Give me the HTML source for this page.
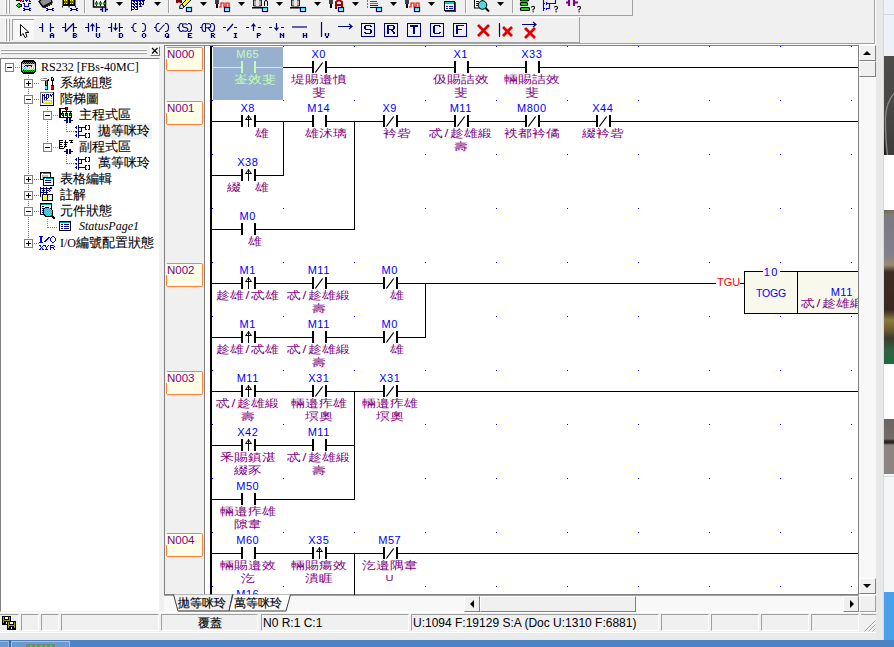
<!DOCTYPE html>
<html><head><meta charset="utf-8"><style>
*{margin:0;padding:0;box-sizing:border-box}
html,body{width:894px;height:647px;overflow:hidden;background:#f0f0f0;position:relative;font-family:"Liberation Sans",sans-serif}
.a{position:absolute}
.lb{position:absolute;width:71px;text-align:center;font:11px "Liberation Sans",sans-serif;line-height:13px;letter-spacing:0.5px;text-indent:0.5px;white-space:nowrap}
.cm{position:absolute;width:111px;text-align:center;font:14px "Liberation Sans",sans-serif;line-height:16px;letter-spacing:0px;white-space:nowrap;transform:scaleY(0.8);transform-origin:0 0}
.sl{display:inline-block;width:7px;text-align:center}
.rl::before{content:"";position:absolute;left:-1px;top:11px;bottom:0;border-left:1px solid #ff8040}
.rl{position:absolute;left:166px;width:37px;height:24px;border:1px solid #ff8040;border-left-color:#ffffe8;border-radius:2px;background:#ffffe8;color:#800080;font:11.5px "Liberation Sans",sans-serif;line-height:12px;padding:0;letter-spacing:0px}
.tr{position:absolute;font:12px "Liberation Serif",serif;line-height:16px;white-space:nowrap;color:#000}
.cj{font-size:13px;-webkit-text-stroke:0.1px #000}
.tb{position:absolute;font:12px 'Liberation Sans',sans-serif;line-height:13px;color:#000;white-space:nowrap;-webkit-text-stroke:0.15px #000}
.sp{position:absolute;top:614px;height:17px;border-top:1px solid #a0a0a0;border-left:1px solid #a0a0a0;border-right:1px solid #fff;border-bottom:1px solid #fff;font:12px "Liberation Sans",sans-serif;line-height:15px;color:#000;white-space:nowrap}
</style></head><body>
<!-- toolbars -->
<div class="a" style="left:874px;top:0;width:1px;height:44px;background:#a0a0a0"></div>
<div class="a" style="left:875px;top:0;width:1px;height:45px;background:#fff"></div>
<div class="a" style="left:0;top:43px;width:875px;height:1px;background:#a0a0a0"></div>
<div class="a" style="left:0;top:44px;width:876px;height:1px;background:#fff"></div>
<div class="a" style="left:0;top:0;width:633px;height:16px;border-right:1px solid #a0a0a0;border-bottom:1px solid #a0a0a0"></div>
<div class="a" style="left:0;top:17px;width:579px;height:1px;background:#fff"></div>
<div class="a" style="left:0;top:17px;width:580px;height:26px;border-right:1px solid #a0a0a0;border-bottom:1px solid #a0a0a0"></div>
<svg class="a" style="left:0;top:0" width="640" height="44">
<rect x="5" y="0" width="1" height="14" fill="#fff"/><rect x="6" y="0" width="1" height="14" fill="#a0a0a0"/>
<rect x="8" y="0" width="1" height="14" fill="#fff"/><rect x="9" y="0" width="1" height="14" fill="#a0a0a0"/>
<rect x="5" y="19" width="1" height="22" fill="#fff"/><rect x="6" y="19" width="1" height="22" fill="#a0a0a0"/>
<rect x="8" y="19" width="1" height="22" fill="#fff"/><rect x="9" y="19" width="1" height="22" fill="#a0a0a0"/>
<rect x="84" y="0" width="1" height="13" fill="#a0a0a0"/><rect x="85" y="0" width="1" height="13" fill="#fff"/>
<rect x="168" y="0" width="1" height="13" fill="#a0a0a0"/><rect x="169" y="0" width="1" height="13" fill="#fff"/>
<rect x="465" y="0" width="1" height="13" fill="#a0a0a0"/><rect x="466" y="0" width="1" height="13" fill="#fff"/>
<rect x="512" y="0" width="1" height="13" fill="#a0a0a0"/><rect x="513" y="0" width="1" height="13" fill="#fff"/>
<rect x="16" y="0" width="1" height="1" fill="#000"/>
<rect x="17" y="0" width="1" height="1" fill="#000"/>
<rect x="18" y="0" width="1" height="1" fill="#000"/>
<rect x="19" y="0" width="1" height="1" fill="#000"/>
<rect x="20" y="0" width="1" height="1" fill="#ff0000"/>
<rect x="21" y="0" width="1" height="1" fill="#000"/>
<rect x="23" y="0" width="1" height="1" fill="#0000ff"/>
<rect x="25" y="0" width="1" height="1" fill="#0000ff"/>
<rect x="26" y="0" width="1" height="1" fill="#0000ff"/>
<rect x="27" y="0" width="1" height="1" fill="#0000ff"/>
<rect x="29" y="0" width="1" height="1" fill="#0000ff"/>
<rect x="20" y="1" width="1" height="1" fill="#000"/>
<rect x="22" y="1" width="1" height="1" fill="#0000ff"/>
<rect x="23" y="1" width="1" height="1" fill="#0000ff"/>
<rect x="26" y="1" width="1" height="1" fill="#0000ff"/>
<rect x="29" y="1" width="1" height="1" fill="#0000ff"/>
<rect x="30" y="1" width="1" height="1" fill="#0000ff"/>
<rect x="18" y="3" width="1" height="1" fill="#000"/>
<rect x="19" y="3" width="1" height="1" fill="#000"/>
<rect x="23" y="3" width="1" height="1" fill="#0000ff"/>
<rect x="24" y="3" width="1" height="1" fill="#0000ff"/>
<rect x="28" y="3" width="1" height="1" fill="#0000ff"/>
<rect x="29" y="3" width="1" height="1" fill="#0000ff"/>
<rect x="30" y="3" width="1" height="1" fill="#0000ff"/>
<rect x="17" y="4" width="1" height="1" fill="#000"/>
<rect x="18" y="4" width="1" height="1" fill="#00ff00"/>
<rect x="19" y="4" width="1" height="1" fill="#000"/>
<rect x="20" y="4" width="1" height="1" fill="#000"/>
<rect x="21" y="4" width="1" height="1" fill="#000"/>
<rect x="24" y="4" width="1" height="1" fill="#0000ff"/>
<rect x="28" y="4" width="1" height="1" fill="#0000ff"/>
<rect x="16" y="5" width="1" height="1" fill="#000"/>
<rect x="17" y="5" width="1" height="1" fill="#00ff00"/>
<rect x="18" y="5" width="1" height="1" fill="#00ff00"/>
<rect x="19" y="5" width="1" height="1" fill="#00ff00"/>
<rect x="20" y="5" width="1" height="1" fill="#00ff00"/>
<rect x="21" y="5" width="1" height="1" fill="#000"/>
<rect x="24" y="5" width="1" height="1" fill="#0000ff"/>
<rect x="28" y="5" width="1" height="1" fill="#0000ff"/>
<rect x="17" y="6" width="1" height="1" fill="#000"/>
<rect x="18" y="6" width="1" height="1" fill="#00ff00"/>
<rect x="19" y="6" width="1" height="1" fill="#000"/>
<rect x="20" y="6" width="1" height="1" fill="#000"/>
<rect x="21" y="6" width="1" height="1" fill="#000"/>
<rect x="24" y="6" width="1" height="1" fill="#0000ff"/>
<rect x="25" y="6" width="1" height="1" fill="#0000ff"/>
<rect x="26" y="6" width="1" height="1" fill="#0000ff"/>
<rect x="27" y="6" width="1" height="1" fill="#0000ff"/>
<rect x="28" y="6" width="1" height="1" fill="#0000ff"/>
<rect x="18" y="7" width="1" height="1" fill="#000"/>
<rect x="19" y="7" width="1" height="1" fill="#000"/>
<rect x="23" y="8" width="1" height="1" fill="#000080"/>
<rect x="24" y="8" width="1" height="1" fill="#000080"/>
<rect x="29" y="8" width="1" height="1" fill="#000080"/>
<rect x="30" y="8" width="1" height="1" fill="#000080"/>
<rect x="24" y="9" width="1" height="1" fill="#000080"/>
<rect x="25" y="9" width="1" height="1" fill="#000080"/>
<rect x="26" y="9" width="1" height="1" fill="#000080"/>
<rect x="27" y="9" width="1" height="1" fill="#000080"/>
<rect x="28" y="9" width="1" height="1" fill="#000080"/>
<rect x="29" y="9" width="1" height="1" fill="#000080"/>
<rect x="23" y="10" width="1" height="1" fill="#000080"/>
<rect x="24" y="10" width="1" height="1" fill="#000080"/>
<rect x="29" y="10" width="1" height="1" fill="#000080"/>
<rect x="30" y="10" width="1" height="1" fill="#000080"/>
<path d="M39 1.5 L42 -1 L51 -1 L52 2 L43 6.5 Z" fill="#909090" stroke="#000" stroke-width="1.2"/>
<path d="M40 3 L43.5 7.5 M43.5 7.5 L52.5 2.5 M44.5 6 L45.5 8 M46.5 5 L47.5 7 M48.5 4 L49.5 6 M50.5 3 L51.5 5" stroke="#000" stroke-width="1.3" fill="none"/>
<rect x="46" y="8" width="1" height="1" fill="#000080"/>
<rect x="47" y="8" width="1" height="1" fill="#000080"/>
<rect x="52" y="8" width="1" height="1" fill="#000080"/>
<rect x="53" y="8" width="1" height="1" fill="#000080"/>
<rect x="47" y="9" width="1" height="1" fill="#000080"/>
<rect x="48" y="9" width="1" height="1" fill="#000080"/>
<rect x="49" y="9" width="1" height="1" fill="#000080"/>
<rect x="50" y="9" width="1" height="1" fill="#000080"/>
<rect x="51" y="9" width="1" height="1" fill="#000080"/>
<rect x="52" y="9" width="1" height="1" fill="#000080"/>
<rect x="46" y="10" width="1" height="1" fill="#000080"/>
<rect x="47" y="10" width="1" height="1" fill="#000080"/>
<rect x="52" y="10" width="1" height="1" fill="#000080"/>
<rect x="53" y="10" width="1" height="1" fill="#000080"/>
<rect x="62.5" y="-1" width="13" height="7" fill="#000"/>
<rect x="64" y="0" width="4" height="4" fill="#606000"/><rect x="70" y="0" width="4" height="4" fill="#606000"/>
<path d="M64 0.5 L68 0.5 M64 3.5 L68 3.5 M70 0.5 L74 0.5 M70 3.5 L74 3.5" stroke="#ffff00" stroke-width="1" stroke-dasharray="1 1"/>
<path d="M62.5 6 L62.5 7.5 M75.5 6 L75.5 7.5 M69 6 L69 7.5" stroke="#000" stroke-width="1.2"/>
<rect x="70" y="8" width="1" height="1" fill="#000080"/>
<rect x="71" y="8" width="1" height="1" fill="#000080"/>
<rect x="76" y="8" width="1" height="1" fill="#000080"/>
<rect x="77" y="8" width="1" height="1" fill="#000080"/>
<rect x="71" y="9" width="1" height="1" fill="#000080"/>
<rect x="72" y="9" width="1" height="1" fill="#000080"/>
<rect x="73" y="9" width="1" height="1" fill="#000080"/>
<rect x="74" y="9" width="1" height="1" fill="#000080"/>
<rect x="75" y="9" width="1" height="1" fill="#000080"/>
<rect x="76" y="9" width="1" height="1" fill="#000080"/>
<rect x="70" y="10" width="1" height="1" fill="#000080"/>
<rect x="71" y="10" width="1" height="1" fill="#000080"/>
<rect x="76" y="10" width="1" height="1" fill="#000080"/>
<rect x="77" y="10" width="1" height="1" fill="#000080"/>
<rect x="93.5" y="-1.5" width="12" height="8.5" fill="#fff" stroke="#000" stroke-width="1.5"/>
<path d="M96.5 1 L96.5 6 M100.5 1 L100.5 6 M104.5 1 L104.5 6" stroke="#000" stroke-width="1"/>
<circle cx="96.5" cy="3.5" r="1.2" fill="#00e000" stroke="#000" stroke-width="0.6"/><circle cx="100.5" cy="3.5" r="1.2" fill="#00e000" stroke="#000" stroke-width="0.6"/><circle cx="104.5" cy="3.5" r="1.2" fill="#00e000" stroke="#000" stroke-width="0.6"/>
<path d="M100 9.5 L102 9.5 M102.5 7 L102.5 12 M105.5 7 L105.5 12 M106 9.5 L108 9.5" stroke="#000080" stroke-width="1.4"/>
<path d="M116 2 L123 2 L119.5 6 Z" fill="#000"/>
<rect x="131" y="0" width="1" height="1" fill="#000080"/>
<rect x="132" y="0" width="1" height="1" fill="#000080"/>
<rect x="133" y="0" width="1" height="1" fill="#000080"/>
<rect x="134" y="0" width="1" height="1" fill="#000080"/>
<rect x="135" y="0" width="1" height="1" fill="#000080"/>
<rect x="136" y="0" width="1" height="1" fill="#000080"/>
<rect x="137" y="0" width="1" height="1" fill="#000080"/>
<rect x="138" y="0" width="1" height="1" fill="#000080"/>
<rect x="139" y="0" width="1" height="1" fill="#000080"/>
<rect x="140" y="0" width="1" height="1" fill="#000080"/>
<rect x="141" y="0" width="1" height="1" fill="#000080"/>
<rect x="142" y="0" width="1" height="1" fill="#000080"/>
<rect x="143" y="0" width="1" height="1" fill="#000080"/>
<rect x="144" y="0" width="1" height="1" fill="#000080"/>
<rect x="131" y="1" width="1" height="1" fill="#000080"/>
<rect x="133" y="1" width="1" height="1" fill="#000080"/>
<rect x="134" y="1" width="1" height="1" fill="#000080"/>
<rect x="136" y="1" width="1" height="1" fill="#000080"/>
<rect x="137" y="1" width="1" height="1" fill="#000080"/>
<rect x="139" y="1" width="1" height="1" fill="#000080"/>
<rect x="140" y="1" width="1" height="1" fill="#000080"/>
<rect x="142" y="1" width="1" height="1" fill="#000080"/>
<rect x="143" y="1" width="1" height="1" fill="#000080"/>
<rect x="131" y="2" width="1" height="1" fill="#000080"/>
<rect x="134" y="2" width="1" height="1" fill="#000080"/>
<rect x="137" y="2" width="1" height="1" fill="#000080"/>
<rect x="140" y="2" width="1" height="1" fill="#000080"/>
<rect x="143" y="2" width="1" height="1" fill="#000080"/>
<rect x="131" y="3" width="1" height="1" fill="#000080"/>
<rect x="132" y="3" width="1" height="1" fill="#000080"/>
<rect x="133" y="3" width="1" height="1" fill="#000080"/>
<rect x="135" y="3" width="1" height="1" fill="#000080"/>
<rect x="136" y="3" width="1" height="1" fill="#000080"/>
<rect x="137" y="3" width="1" height="1" fill="#000080"/>
<rect x="139" y="3" width="1" height="1" fill="#000080"/>
<rect x="140" y="3" width="1" height="1" fill="#000080"/>
<rect x="141" y="3" width="1" height="1" fill="#000080"/>
<rect x="143" y="3" width="1" height="1" fill="#000080"/>
<rect x="131" y="4" width="1" height="1" fill="#000080"/>
<rect x="133" y="4" width="1" height="1" fill="#000080"/>
<rect x="134" y="4" width="1" height="1" fill="#000080"/>
<rect x="136" y="4" width="1" height="1" fill="#000080"/>
<rect x="137" y="4" width="1" height="1" fill="#000080"/>
<rect x="139" y="4" width="1" height="1" fill="#000080"/>
<rect x="140" y="4" width="1" height="1" fill="#000080"/>
<rect x="142" y="4" width="1" height="1" fill="#000080"/>
<rect x="143" y="4" width="1" height="1" fill="#000080"/>
<rect x="131" y="5" width="1" height="1" fill="#000080"/>
<rect x="134" y="5" width="1" height="1" fill="#000080"/>
<rect x="137" y="5" width="1" height="1" fill="#000080"/>
<rect x="140" y="5" width="1" height="1" fill="#000080"/>
<rect x="131" y="6" width="1" height="1" fill="#000080"/>
<rect x="132" y="6" width="1" height="1" fill="#000080"/>
<rect x="133" y="6" width="1" height="1" fill="#000080"/>
<rect x="135" y="6" width="1" height="1" fill="#000080"/>
<rect x="136" y="6" width="1" height="1" fill="#000080"/>
<rect x="137" y="6" width="1" height="1" fill="#000080"/>
<rect x="139" y="6" width="1" height="1" fill="#000080"/>
<rect x="140" y="6" width="1" height="1" fill="#000080"/>
<rect x="141" y="6" width="1" height="1" fill="#000080"/>
<rect x="131" y="7" width="1" height="1" fill="#000080"/>
<rect x="133" y="7" width="1" height="1" fill="#000080"/>
<rect x="134" y="7" width="1" height="1" fill="#000080"/>
<rect x="136" y="7" width="1" height="1" fill="#000080"/>
<rect x="137" y="7" width="1" height="1" fill="#000080"/>
<rect x="131" y="8" width="1" height="1" fill="#000080"/>
<rect x="134" y="8" width="1" height="1" fill="#000080"/>
<rect x="137" y="8" width="1" height="1" fill="#000080"/>
<rect x="131" y="9" width="1" height="1" fill="#000080"/>
<rect x="132" y="9" width="1" height="1" fill="#000080"/>
<rect x="133" y="9" width="1" height="1" fill="#000080"/>
<rect x="135" y="9" width="1" height="1" fill="#000080"/>
<rect x="136" y="9" width="1" height="1" fill="#000080"/>
<rect x="137" y="9" width="1" height="1" fill="#000080"/>
<rect x="131" y="10" width="1" height="1" fill="#000080"/>
<path d="M154 2 L161 2 L157.5 6 Z" fill="#000"/>
<path d="M176 0 L182 0 L182 3 L180 3 L179 2 L178 3 L176 3 Z" fill="#800000"/>
<path d="M182 4 L187 -1 L191 0 L184 7 Z" fill="#ffff00" stroke="#000" stroke-width="1"/>
<path d="M179.5 8.5 L180 5.5 L182 4 L184 7 L182.5 8.5 Z" fill="#e0e0e0" stroke="#000" stroke-width="1"/>
<rect x="186.5" y="7.5" width="5" height="4" fill="#f0e8e0" stroke="#000080" stroke-width="1.2"/><rect x="187" y="8" width="4" height="1.5" fill="#20f0f0"/>
<path d="M200 2 L207 2 L203.5 6 Z" fill="#000"/>
<rect x="215" y="0" width="4" height="4" fill="#404040"/><rect x="216" y="4" width="2" height="4" fill="#000"/>
<path d="M219 7 L221 7 L221 3 L224 3 L224 7 L226 7 L226 3 L229 3 L229 7" stroke="#ff0000" stroke-width="1.2" fill="none"/>
<rect x="224.5" y="7.5" width="5" height="4" fill="#f0e8e0" stroke="#000080" stroke-width="1.2"/><rect x="225" y="8" width="4" height="1.5" fill="#20f0f0"/>
<path d="M238 2 L245 2 L241.5 6 Z" fill="#000"/>
<path d="M253.5 6 L253.5 0 L261.5 0 L261.5 6 Z" fill="#b0b0b0" stroke="#202020" stroke-width="1"/><rect x="256" y="0" width="3" height="6" fill="#e8e8e8"/><rect x="252" y="7" width="11" height="1.5" fill="#000"/>
<path d="M264.5 6 L264.5 2 Q264.5 0.5 266 0.5 Q267.5 0.5 267.5 2 L267.5 6" stroke="#000" fill="none"/>
<rect x="262.5" y="7.5" width="5" height="4" fill="#f0e8e0" stroke="#000080" stroke-width="1.2"/><rect x="263" y="8" width="4" height="1.5" fill="#20f0f0"/>
<path d="M276 2 L283 2 L279.5 6 Z" fill="#000"/>
<path d="M291.5 6 L291.5 0 L299.5 0 L299.5 6 Z" fill="#b0b0b0" stroke="#202020" stroke-width="1"/><rect x="294" y="0" width="3" height="6" fill="#e8e8e8"/><rect x="290" y="7" width="11" height="1.5" fill="#000"/>
<rect x="300.5" y="7.5" width="5" height="4" fill="#f0e8e0" stroke="#000080" stroke-width="1.2"/><rect x="301" y="8" width="4" height="1.5" fill="#20f0f0"/>
<path d="M314 2 L321 2 L317.5 6 Z" fill="#000"/>
<rect x="329" y="0" width="4" height="4" fill="#404040"/><rect x="330" y="4" width="2" height="4" fill="#000"/>
<path d="M336 9 L336 2 L339 0 L342 2 L342 9 M336 5 L342 5" stroke="#a00000" stroke-width="2" fill="none"/>
<rect x="338.5" y="7.5" width="5" height="4" fill="#f0e8e0" stroke="#000080" stroke-width="1.2"/><rect x="339" y="8" width="4" height="1.5" fill="#20f0f0"/>
<path d="M352 2 L359 2 L355.5 6 Z" fill="#000"/>
<path d="M367 1 L368 1 M367 4 L368 4 M367 7 L368 7" stroke="#000" stroke-width="1"/>
<rect x="370" y="1" width="7" height="1" fill="#ff0000"/><rect x="370" y="3" width="8" height="1" fill="#ff00ff"/><rect x="370" y="5" width="8" height="1" fill="#0000ff"/><rect x="370" y="7" width="6" height="1" fill="#000080"/>
<rect x="376.5" y="7.5" width="5" height="4" fill="#f0e8e0" stroke="#000080" stroke-width="1.2"/><rect x="377" y="8" width="4" height="1.5" fill="#20f0f0"/>
<path d="M390 2 L397 2 L393.5 6 Z" fill="#000"/>
<rect x="405" y="0" width="4" height="4" fill="#404040"/><rect x="406" y="4" width="2" height="4" fill="#000"/>
<path d="M409 7 L411 7 L411 3 L414 3 L414 7 L416 7 L416 3 L419 3 L419 7" stroke="#ff0000" stroke-width="1.2" fill="none"/>
<rect x="414.5" y="7.5" width="5" height="4" fill="#f0e8e0" stroke="#000080" stroke-width="1.2"/><rect x="415" y="8" width="4" height="1.5" fill="#20f0f0"/>
<path d="M428 2 L435 2 L431.5 6 Z" fill="#000"/>
<rect x="445" y="2" width="11" height="10" fill="#404040"/>
<rect x="444.5" y="1.5" width="10" height="9" fill="#fff" stroke="#000" stroke-width="1"/><rect x="445" y="2" width="9" height="2" fill="#00d0d0"/>
<path d="M446 6.5 L448 6.5 M449 6.5 L453 6.5 M446 8.5 L448 8.5 M449 8.5 L453 8.5" stroke="#0000ff" stroke-width="1"/>
<rect x="474.5" y="-1" width="8" height="9" fill="#fff" stroke="#000" stroke-width="1"/><path d="M476 1.5 L479 1.5 M476 3.5 L479 3.5 M476 5.5 L478 5.5" stroke="#000080"/>
<circle cx="482.5" cy="5" r="4.3" fill="#50d8d8" stroke="#000" stroke-width="1"/><path d="M485.5 8 L489 11.5" stroke="#000" stroke-width="2"/>
<path d="M497 2 L504 2 L500.5 6 Z" fill="#000"/>
<rect x="520.5" y="-2" width="8" height="3" rx="1" fill="#00e000" stroke="#000" stroke-width="1.2"/>
<rect x="520.5" y="2.5" width="7" height="3" rx="1" fill="#00e000" stroke="#000" stroke-width="1.2"/>
<rect x="520.5" y="7.5" width="9" height="3" rx="1" fill="#00e000" stroke="#000" stroke-width="1.2"/>
<path d="M531.5 7.5 Q531.5 6.3 533 6.3 Q534.5 6.3 534.5 7.8 Q534.5 8.8 533 9.5 L533 10.5" stroke="#000" stroke-width="1.1" fill="none"/><rect x="532.5" y="11.2" width="1.2" height="1.2" fill="#000"/>
<path d="M543.5 0 L543.5 11 M543.5 3.5 L545 3.5 M546.5 2 L546.5 5 M546.5 8 L546.5 10 M543.5 8.5 L545 8.5 M547 3.5 L549.5 3.5 L549.5 8.5 L547 8.5 M549.5 3.5 L555.5 3.5 L555.5 0" stroke="#0000ff" stroke-width="1.1" fill="none"/>
<path d="M554.5 7.5 Q554.5 6.3 556 6.3 Q557.5 6.3 557.5 7.8 Q557.5 8.8 556 9.5 L556 10.5" stroke="#000" stroke-width="1.1" fill="none"/><rect x="555.5" y="11.2" width="1.2" height="1.2" fill="#000"/>
<path d="M566 2.5 L568 2.5 M569 0 L569 6 M574 0 L574 6 M575 2.5 L578 2.5" stroke="#800080" stroke-width="2.2" fill="none"/>
<path d="M577.5 7.5 Q577.5 6.3 579 6.3 Q580.5 6.3 580.5 7.8 Q580.5 8.8 579 9.5 L579 10.5" stroke="#000" stroke-width="1.1" fill="none"/><rect x="578.5" y="11.2" width="1.2" height="1.2" fill="#000"/>
<rect x="12" y="19" width="22" height="21" fill="#f8f8f8"/>
<rect x="12" y="19" width="22" height="1" fill="#a0a0a0"/><rect x="12" y="19" width="1" height="21" fill="#a0a0a0"/>
<path d="M20.5 24.5 L20.5 36 L23 33.5 L25 37.5 L27 36.5 L25.5 32.5 L29 32.5 Z" fill="#fff" stroke="#000" stroke-width="1"/>
<path d="M39 27.5 L42 27.5 M42.5 23 L42.5 32 M50.5 23 L50.5 32 M51 27.5 L54 27.5" stroke="#000080" stroke-width="1.2" fill="none"/>
<rect x="50.8" y="33" width="1.4" height="1" fill="#000080"/>
<rect x="51.8" y="33" width="1.4" height="1" fill="#000080"/>
<rect x="49.8" y="34" width="1.4" height="1" fill="#000080"/>
<rect x="52.8" y="34" width="1.4" height="1" fill="#000080"/>
<rect x="49.8" y="35" width="1.4" height="1" fill="#000080"/>
<rect x="50.8" y="35" width="1.4" height="1" fill="#000080"/>
<rect x="51.8" y="35" width="1.4" height="1" fill="#000080"/>
<rect x="52.8" y="35" width="1.4" height="1" fill="#000080"/>
<rect x="49.8" y="36" width="1.4" height="1" fill="#000080"/>
<rect x="52.8" y="36" width="1.4" height="1" fill="#000080"/>
<rect x="49.8" y="37" width="1.4" height="1" fill="#000080"/>
<rect x="52.8" y="37" width="1.4" height="1" fill="#000080"/>
<path d="M62 27.5 L65 27.5 M65.5 23 L65.5 32 M73.5 23 L73.5 32 M74 27.5 L77 27.5" stroke="#000080" stroke-width="1.2" fill="none"/>
<path d="M65.5 31.5 L73.5 23.5" stroke="#000080" stroke-width="1.2"/>
<rect x="72.8" y="33" width="1.4" height="1" fill="#000080"/>
<rect x="73.8" y="33" width="1.4" height="1" fill="#000080"/>
<rect x="74.8" y="33" width="1.4" height="1" fill="#000080"/>
<rect x="72.8" y="34" width="1.4" height="1" fill="#000080"/>
<rect x="75.8" y="34" width="1.4" height="1" fill="#000080"/>
<rect x="72.8" y="35" width="1.4" height="1" fill="#000080"/>
<rect x="73.8" y="35" width="1.4" height="1" fill="#000080"/>
<rect x="74.8" y="35" width="1.4" height="1" fill="#000080"/>
<rect x="72.8" y="36" width="1.4" height="1" fill="#000080"/>
<rect x="75.8" y="36" width="1.4" height="1" fill="#000080"/>
<rect x="72.8" y="37" width="1.4" height="1" fill="#000080"/>
<rect x="73.8" y="37" width="1.4" height="1" fill="#000080"/>
<rect x="74.8" y="37" width="1.4" height="1" fill="#000080"/>
<path d="M85 27.5 L88 27.5 M88.5 23 L88.5 32 M96.5 23 L96.5 32 M97 27.5 L100 27.5" stroke="#000080" stroke-width="1.2" fill="none"/>
<path d="M92.5 24 L92.5 31 M90.5 26.5 L92.5 24 L94.5 26.5" stroke="#000080" stroke-width="1.2" fill="none"/>
<rect x="95.8" y="33" width="1.4" height="1" fill="#000080"/>
<rect x="98.8" y="33" width="1.4" height="1" fill="#000080"/>
<rect x="95.8" y="34" width="1.4" height="1" fill="#000080"/>
<rect x="98.8" y="34" width="1.4" height="1" fill="#000080"/>
<rect x="95.8" y="35" width="1.4" height="1" fill="#000080"/>
<rect x="98.8" y="35" width="1.4" height="1" fill="#000080"/>
<rect x="95.8" y="36" width="1.4" height="1" fill="#000080"/>
<rect x="98.8" y="36" width="1.4" height="1" fill="#000080"/>
<rect x="96.8" y="37" width="1.4" height="1" fill="#000080"/>
<rect x="97.8" y="37" width="1.4" height="1" fill="#000080"/>
<path d="M108 27.5 L111 27.5 M111.5 23 L111.5 32 M119.5 23 L119.5 32 M120 27.5 L123 27.5" stroke="#000080" stroke-width="1.2" fill="none"/>
<path d="M115.5 23 L115.5 30 M113.5 27.5 L115.5 30 L117.5 27.5" stroke="#000080" stroke-width="1.2" fill="none"/>
<rect x="118.8" y="33" width="1.4" height="1" fill="#000080"/>
<rect x="119.8" y="33" width="1.4" height="1" fill="#000080"/>
<rect x="120.8" y="33" width="1.4" height="1" fill="#000080"/>
<rect x="118.8" y="34" width="1.4" height="1" fill="#000080"/>
<rect x="121.8" y="34" width="1.4" height="1" fill="#000080"/>
<rect x="118.8" y="35" width="1.4" height="1" fill="#000080"/>
<rect x="121.8" y="35" width="1.4" height="1" fill="#000080"/>
<rect x="118.8" y="36" width="1.4" height="1" fill="#000080"/>
<rect x="121.8" y="36" width="1.4" height="1" fill="#000080"/>
<rect x="118.8" y="37" width="1.4" height="1" fill="#000080"/>
<rect x="119.8" y="37" width="1.4" height="1" fill="#000080"/>
<rect x="120.8" y="37" width="1.4" height="1" fill="#000080"/>
<path d="M131 27.5 L133 27.5 M136.5 23.5 L135.5 23.5 Q133 23.5 133 27.5 Q133 31.5 135.5 31.5 L136.5 31.5 M142 23.5 L143 23.5 Q145.5 23.5 145.5 27.5 Q145.5 31.5 143 31.5 L142 31.5" stroke="#000080" stroke-width="1.1" fill="none"/>
<rect x="142.8" y="33" width="1.4" height="1" fill="#000080"/>
<rect x="143.8" y="33" width="1.4" height="1" fill="#000080"/>
<rect x="141.8" y="34" width="1.4" height="1" fill="#000080"/>
<rect x="144.8" y="34" width="1.4" height="1" fill="#000080"/>
<rect x="141.8" y="35" width="1.4" height="1" fill="#000080"/>
<rect x="144.8" y="35" width="1.4" height="1" fill="#000080"/>
<rect x="141.8" y="36" width="1.4" height="1" fill="#000080"/>
<rect x="144.8" y="36" width="1.4" height="1" fill="#000080"/>
<rect x="142.8" y="37" width="1.4" height="1" fill="#000080"/>
<rect x="143.8" y="37" width="1.4" height="1" fill="#000080"/>
<path d="M154 27.5 L156 27.5 M159.5 23.5 L158.5 23.5 Q156 23.5 156 27.5 Q156 31.5 158.5 31.5 L159.5 31.5 M165 23.5 L166 23.5 Q168.5 23.5 168.5 27.5 Q168.5 31.5 166 31.5 L165 31.5" stroke="#000080" stroke-width="1.1" fill="none"/>
<path d="M159 30.5 L164.5 24.5" stroke="#000080" stroke-width="1.1"/>
<rect x="165.8" y="33" width="1.4" height="1" fill="#000080"/>
<rect x="166.8" y="33" width="1.4" height="1" fill="#000080"/>
<rect x="164.8" y="34" width="1.4" height="1" fill="#000080"/>
<rect x="167.8" y="34" width="1.4" height="1" fill="#000080"/>
<rect x="164.8" y="35" width="1.4" height="1" fill="#000080"/>
<rect x="167.8" y="35" width="1.4" height="1" fill="#000080"/>
<rect x="164.8" y="36" width="1.4" height="1" fill="#000080"/>
<rect x="166.8" y="36" width="1.4" height="1" fill="#000080"/>
<rect x="167.8" y="36" width="1.4" height="1" fill="#000080"/>
<rect x="165.8" y="37" width="1.4" height="1" fill="#000080"/>
<rect x="166.8" y="37" width="1.4" height="1" fill="#000080"/>
<rect x="167.8" y="37" width="1.4" height="1" fill="#000080"/>
<path d="M177 27.5 L179 27.5 M182.5 23.5 L181.5 23.5 Q179 23.5 179 27.5 Q179 31.5 181.5 31.5 L182.5 31.5 M188 23.5 L189 23.5 Q191.5 23.5 191.5 27.5 Q191.5 31.5 189 31.5 L188 31.5" stroke="#000080" stroke-width="1.1" fill="none"/>
<path d="M187.5 25 Q187 23.8 185 23.8 Q182.5 23.8 182.5 25.6 Q182.5 27.3 185 27.5 Q187.8 27.7 187.8 29.5 Q187.8 31.3 185 31.3 Q183 31.3 182.3 30" stroke="#000080" stroke-width="1.1" fill="none"/>
<rect x="187.8" y="33" width="1.4" height="1" fill="#000080"/>
<rect x="188.8" y="33" width="1.4" height="1" fill="#000080"/>
<rect x="189.8" y="33" width="1.4" height="1" fill="#000080"/>
<rect x="190.8" y="33" width="1.4" height="1" fill="#000080"/>
<rect x="187.8" y="34" width="1.4" height="1" fill="#000080"/>
<rect x="187.8" y="35" width="1.4" height="1" fill="#000080"/>
<rect x="188.8" y="35" width="1.4" height="1" fill="#000080"/>
<rect x="189.8" y="35" width="1.4" height="1" fill="#000080"/>
<rect x="187.8" y="36" width="1.4" height="1" fill="#000080"/>
<rect x="187.8" y="37" width="1.4" height="1" fill="#000080"/>
<rect x="188.8" y="37" width="1.4" height="1" fill="#000080"/>
<rect x="189.8" y="37" width="1.4" height="1" fill="#000080"/>
<rect x="190.8" y="37" width="1.4" height="1" fill="#000080"/>
<path d="M200 27.5 L202 27.5 M205.5 23.5 L204.5 23.5 Q202 23.5 202 27.5 Q202 31.5 204.5 31.5 L205.5 31.5 M211 23.5 L212 23.5 Q214.5 23.5 214.5 27.5 Q214.5 31.5 212 31.5 L211 31.5" stroke="#000080" stroke-width="1.1" fill="none"/>
<path d="M205.5 31.5 L205.5 23.8 L208.5 23.8 Q210.8 23.8 210.8 25.8 Q210.8 27.8 208.5 27.8 L205.5 27.8 M208 27.8 L211 31.5" stroke="#000080" stroke-width="1.1" fill="none"/>
<rect x="210.8" y="33" width="1.4" height="1" fill="#000080"/>
<rect x="211.8" y="33" width="1.4" height="1" fill="#000080"/>
<rect x="212.8" y="33" width="1.4" height="1" fill="#000080"/>
<rect x="210.8" y="34" width="1.4" height="1" fill="#000080"/>
<rect x="213.8" y="34" width="1.4" height="1" fill="#000080"/>
<rect x="210.8" y="35" width="1.4" height="1" fill="#000080"/>
<rect x="211.8" y="35" width="1.4" height="1" fill="#000080"/>
<rect x="212.8" y="35" width="1.4" height="1" fill="#000080"/>
<rect x="210.8" y="36" width="1.4" height="1" fill="#000080"/>
<rect x="212.8" y="36" width="1.4" height="1" fill="#000080"/>
<rect x="210.8" y="37" width="1.4" height="1" fill="#000080"/>
<rect x="213.8" y="37" width="1.4" height="1" fill="#000080"/>
<path d="M223 27.5 L226 27.5 M227 31 L233 24 M234 27.5 L237 27.5" stroke="#000080" stroke-width="1.2" fill="none"/>
<rect x="233.8" y="33" width="1.4" height="1" fill="#000080"/>
<rect x="234.8" y="33" width="1.4" height="1" fill="#000080"/>
<rect x="235.8" y="33" width="1.4" height="1" fill="#000080"/>
<rect x="234.8" y="34" width="1.4" height="1" fill="#000080"/>
<rect x="234.8" y="35" width="1.4" height="1" fill="#000080"/>
<rect x="234.8" y="36" width="1.4" height="1" fill="#000080"/>
<rect x="233.8" y="37" width="1.4" height="1" fill="#000080"/>
<rect x="234.8" y="37" width="1.4" height="1" fill="#000080"/>
<rect x="235.8" y="37" width="1.4" height="1" fill="#000080"/>
<path d="M246 27.5 L249 27.5 M253.5 24 L253.5 31 M251.5 26.5 L253.5 24 L255.5 26.5 M258 27.5 L261 27.5" stroke="#000080" stroke-width="1.2" fill="none"/>
<rect x="256.8" y="33" width="1.4" height="1" fill="#000080"/>
<rect x="257.8" y="33" width="1.4" height="1" fill="#000080"/>
<rect x="258.8" y="33" width="1.4" height="1" fill="#000080"/>
<rect x="256.8" y="34" width="1.4" height="1" fill="#000080"/>
<rect x="259.8" y="34" width="1.4" height="1" fill="#000080"/>
<rect x="256.8" y="35" width="1.4" height="1" fill="#000080"/>
<rect x="257.8" y="35" width="1.4" height="1" fill="#000080"/>
<rect x="258.8" y="35" width="1.4" height="1" fill="#000080"/>
<rect x="256.8" y="36" width="1.4" height="1" fill="#000080"/>
<rect x="256.8" y="37" width="1.4" height="1" fill="#000080"/>
<path d="M269 27.5 L272 27.5 M276.5 23 L276.5 30 M274.5 27.5 L276.5 30 L278.5 27.5 M281 27.5 L284 27.5" stroke="#000080" stroke-width="1.2" fill="none"/>
<rect x="279.8" y="33" width="1.4" height="1" fill="#000080"/>
<rect x="282.8" y="33" width="1.4" height="1" fill="#000080"/>
<rect x="279.8" y="34" width="1.4" height="1" fill="#000080"/>
<rect x="280.8" y="34" width="1.4" height="1" fill="#000080"/>
<rect x="282.8" y="34" width="1.4" height="1" fill="#000080"/>
<rect x="279.8" y="35" width="1.4" height="1" fill="#000080"/>
<rect x="281.8" y="35" width="1.4" height="1" fill="#000080"/>
<rect x="282.8" y="35" width="1.4" height="1" fill="#000080"/>
<rect x="279.8" y="36" width="1.4" height="1" fill="#000080"/>
<rect x="282.8" y="36" width="1.4" height="1" fill="#000080"/>
<rect x="279.8" y="37" width="1.4" height="1" fill="#000080"/>
<rect x="282.8" y="37" width="1.4" height="1" fill="#000080"/>
<path d="M292 27 L307 27" stroke="#000080" stroke-width="1.2"/>
<rect x="302.8" y="33" width="1.4" height="1" fill="#000080"/>
<rect x="305.8" y="33" width="1.4" height="1" fill="#000080"/>
<rect x="302.8" y="34" width="1.4" height="1" fill="#000080"/>
<rect x="305.8" y="34" width="1.4" height="1" fill="#000080"/>
<rect x="302.8" y="35" width="1.4" height="1" fill="#000080"/>
<rect x="303.8" y="35" width="1.4" height="1" fill="#000080"/>
<rect x="304.8" y="35" width="1.4" height="1" fill="#000080"/>
<rect x="305.8" y="35" width="1.4" height="1" fill="#000080"/>
<rect x="302.8" y="36" width="1.4" height="1" fill="#000080"/>
<rect x="305.8" y="36" width="1.4" height="1" fill="#000080"/>
<rect x="302.8" y="37" width="1.4" height="1" fill="#000080"/>
<rect x="305.8" y="37" width="1.4" height="1" fill="#000080"/>
<path d="M321.5 22 L321.5 37" stroke="#000080" stroke-width="1.2"/>
<rect x="324.8" y="33" width="1.4" height="1" fill="#000080"/>
<rect x="327.8" y="33" width="1.4" height="1" fill="#000080"/>
<rect x="324.8" y="34" width="1.4" height="1" fill="#000080"/>
<rect x="327.8" y="34" width="1.4" height="1" fill="#000080"/>
<rect x="324.8" y="35" width="1.4" height="1" fill="#000080"/>
<rect x="327.8" y="35" width="1.4" height="1" fill="#000080"/>
<rect x="325.8" y="36" width="1.4" height="1" fill="#000080"/>
<rect x="326.8" y="36" width="1.4" height="1" fill="#000080"/>
<rect x="325.8" y="37" width="1.4" height="1" fill="#000080"/>
<rect x="326.8" y="37" width="1.4" height="1" fill="#000080"/>
<path d="M338 26.5 L352 26.5 M349 24 L352 26.5 L349 29" stroke="#000080" stroke-width="1.2" fill="none"/>
<rect x="361.5" y="23.5" width="13" height="13" fill="none" stroke="#000080" stroke-width="1"/>
<rect x="365" y="25" width="6" height="1" fill="#000080"/>
<rect x="364" y="26" width="2" height="1" fill="#000080"/>
<rect x="370" y="26" width="2" height="1" fill="#000080"/>
<rect x="364" y="27" width="2" height="1" fill="#000080"/>
<rect x="364" y="28" width="2" height="1" fill="#000080"/>
<rect x="365" y="29" width="6" height="1" fill="#000080"/>
<rect x="370" y="30" width="2" height="1" fill="#000080"/>
<rect x="370" y="31" width="2" height="1" fill="#000080"/>
<rect x="364" y="32" width="2" height="1" fill="#000080"/>
<rect x="370" y="32" width="2" height="1" fill="#000080"/>
<rect x="365" y="33" width="6" height="1" fill="#000080"/>
<rect x="384.5" y="23.5" width="13" height="13" fill="none" stroke="#000080" stroke-width="1"/>
<rect x="387" y="25" width="7" height="1" fill="#000080"/>
<rect x="387" y="26" width="2" height="1" fill="#000080"/>
<rect x="393" y="26" width="2" height="1" fill="#000080"/>
<rect x="387" y="27" width="2" height="1" fill="#000080"/>
<rect x="393" y="27" width="2" height="1" fill="#000080"/>
<rect x="387" y="28" width="2" height="1" fill="#000080"/>
<rect x="393" y="28" width="2" height="1" fill="#000080"/>
<rect x="387" y="29" width="7" height="1" fill="#000080"/>
<rect x="387" y="30" width="2" height="1" fill="#000080"/>
<rect x="391" y="30" width="2" height="1" fill="#000080"/>
<rect x="387" y="31" width="2" height="1" fill="#000080"/>
<rect x="392" y="31" width="2" height="1" fill="#000080"/>
<rect x="387" y="32" width="2" height="1" fill="#000080"/>
<rect x="393" y="32" width="2" height="1" fill="#000080"/>
<rect x="387" y="33" width="2" height="1" fill="#000080"/>
<rect x="393" y="33" width="2" height="1" fill="#000080"/>
<rect x="407.5" y="23.5" width="13" height="13" fill="none" stroke="#000080" stroke-width="1"/>
<rect x="410" y="25" width="8" height="1" fill="#000080"/>
<rect x="410" y="26" width="8" height="1" fill="#000080"/>
<rect x="413" y="27" width="2" height="1" fill="#000080"/>
<rect x="413" y="28" width="2" height="1" fill="#000080"/>
<rect x="413" y="29" width="2" height="1" fill="#000080"/>
<rect x="413" y="30" width="2" height="1" fill="#000080"/>
<rect x="413" y="31" width="2" height="1" fill="#000080"/>
<rect x="413" y="32" width="2" height="1" fill="#000080"/>
<rect x="413" y="33" width="2" height="1" fill="#000080"/>
<rect x="430.5" y="23.5" width="13" height="13" fill="none" stroke="#000080" stroke-width="1"/>
<rect x="434" y="25" width="6" height="1" fill="#000080"/>
<rect x="433" y="26" width="2" height="1" fill="#000080"/>
<rect x="439" y="26" width="2" height="1" fill="#000080"/>
<rect x="433" y="27" width="2" height="1" fill="#000080"/>
<rect x="433" y="28" width="2" height="1" fill="#000080"/>
<rect x="433" y="29" width="2" height="1" fill="#000080"/>
<rect x="433" y="30" width="2" height="1" fill="#000080"/>
<rect x="433" y="31" width="2" height="1" fill="#000080"/>
<rect x="433" y="32" width="2" height="1" fill="#000080"/>
<rect x="439" y="32" width="2" height="1" fill="#000080"/>
<rect x="434" y="33" width="6" height="1" fill="#000080"/>
<rect x="453.5" y="23.5" width="13" height="13" fill="none" stroke="#000080" stroke-width="1"/>
<rect x="456" y="25" width="8" height="1" fill="#000080"/>
<rect x="456" y="26" width="2" height="1" fill="#000080"/>
<rect x="456" y="27" width="2" height="1" fill="#000080"/>
<rect x="456" y="28" width="2" height="1" fill="#000080"/>
<rect x="456" y="29" width="6" height="1" fill="#000080"/>
<rect x="456" y="30" width="2" height="1" fill="#000080"/>
<rect x="456" y="31" width="2" height="1" fill="#000080"/>
<rect x="456" y="32" width="2" height="1" fill="#000080"/>
<rect x="456" y="33" width="2" height="1" fill="#000080"/>
<path d="M478 25 L489 36 M489 25 L478 36" stroke="#e00000" stroke-width="2.8"/>
<path d="M499.5 23 L499.5 37" stroke="#000080" stroke-width="1.2"/>
<path d="M503 27 L512 36 M512 27 L503 36" stroke="#e00000" stroke-width="2.8"/>
<path d="M522 24.5 L536 24.5 M533 22 L536 24.5 L533 27" stroke="#000080" stroke-width="1.2" fill="none"/>
<path d="M525 28 L535 38 M535 28 L525 38" stroke="#e00000" stroke-width="2.8"/>
</svg>
<!-- dock panel -->
<div class="a" style="left:1px;top:49px;width:146px;height:1px;background:#fff"></div>
<div class="a" style="left:1px;top:50px;width:146px;height:1px;background:#a0a0a0"></div>
<div class="a" style="left:1px;top:52px;width:146px;height:1px;background:#fff"></div>
<div class="a" style="left:1px;top:53px;width:146px;height:1px;background:#a0a0a0"></div>
<div class="a" style="left:150px;top:46px;width:10px;height:10px;border-right:1px solid #808080;border-bottom:1px solid #808080;border-top:1px solid #fff;border-left:1px solid #fff"></div>
<svg class="a" style="left:150px;top:46px" width="10" height="10"><path d="M2 2 L7.5 7.5 M7.5 2 L2 7.5" stroke="#000" stroke-width="1.1"/></svg>
<div class="a" style="left:0;top:58px;width:160px;height:554px;background:#fff;border-left:1px solid #808080;border-top:1px solid #808080;border-right:1px solid #f0f0f0;border-bottom:1px solid #f0f0f0"></div>
<div class="a" style="left:96px;top:123px;width:56px;height:16px;background:#f0f0f0"></div>
<svg class="a" style="left:0;top:0" width="160" height="260">
<rect x="28" y="75" width="1" height="1" fill="#808080"/>
<rect x="28" y="77" width="1" height="1" fill="#808080"/>
<rect x="28" y="79" width="1" height="1" fill="#808080"/>
<rect x="28" y="81" width="1" height="1" fill="#808080"/>
<rect x="28" y="83" width="1" height="1" fill="#808080"/>
<rect x="28" y="85" width="1" height="1" fill="#808080"/>
<rect x="28" y="87" width="1" height="1" fill="#808080"/>
<rect x="28" y="89" width="1" height="1" fill="#808080"/>
<rect x="28" y="91" width="1" height="1" fill="#808080"/>
<rect x="28" y="93" width="1" height="1" fill="#808080"/>
<rect x="28" y="95" width="1" height="1" fill="#808080"/>
<rect x="28" y="97" width="1" height="1" fill="#808080"/>
<rect x="28" y="99" width="1" height="1" fill="#808080"/>
<rect x="28" y="101" width="1" height="1" fill="#808080"/>
<rect x="28" y="103" width="1" height="1" fill="#808080"/>
<rect x="28" y="105" width="1" height="1" fill="#808080"/>
<rect x="28" y="107" width="1" height="1" fill="#808080"/>
<rect x="28" y="109" width="1" height="1" fill="#808080"/>
<rect x="28" y="111" width="1" height="1" fill="#808080"/>
<rect x="28" y="113" width="1" height="1" fill="#808080"/>
<rect x="28" y="115" width="1" height="1" fill="#808080"/>
<rect x="28" y="117" width="1" height="1" fill="#808080"/>
<rect x="28" y="119" width="1" height="1" fill="#808080"/>
<rect x="28" y="121" width="1" height="1" fill="#808080"/>
<rect x="28" y="123" width="1" height="1" fill="#808080"/>
<rect x="28" y="125" width="1" height="1" fill="#808080"/>
<rect x="28" y="127" width="1" height="1" fill="#808080"/>
<rect x="28" y="129" width="1" height="1" fill="#808080"/>
<rect x="28" y="131" width="1" height="1" fill="#808080"/>
<rect x="28" y="133" width="1" height="1" fill="#808080"/>
<rect x="28" y="135" width="1" height="1" fill="#808080"/>
<rect x="28" y="137" width="1" height="1" fill="#808080"/>
<rect x="28" y="139" width="1" height="1" fill="#808080"/>
<rect x="28" y="141" width="1" height="1" fill="#808080"/>
<rect x="28" y="143" width="1" height="1" fill="#808080"/>
<rect x="28" y="145" width="1" height="1" fill="#808080"/>
<rect x="28" y="147" width="1" height="1" fill="#808080"/>
<rect x="28" y="149" width="1" height="1" fill="#808080"/>
<rect x="28" y="151" width="1" height="1" fill="#808080"/>
<rect x="28" y="153" width="1" height="1" fill="#808080"/>
<rect x="28" y="155" width="1" height="1" fill="#808080"/>
<rect x="28" y="157" width="1" height="1" fill="#808080"/>
<rect x="28" y="159" width="1" height="1" fill="#808080"/>
<rect x="28" y="161" width="1" height="1" fill="#808080"/>
<rect x="28" y="163" width="1" height="1" fill="#808080"/>
<rect x="28" y="165" width="1" height="1" fill="#808080"/>
<rect x="28" y="167" width="1" height="1" fill="#808080"/>
<rect x="28" y="169" width="1" height="1" fill="#808080"/>
<rect x="28" y="171" width="1" height="1" fill="#808080"/>
<rect x="28" y="173" width="1" height="1" fill="#808080"/>
<rect x="28" y="175" width="1" height="1" fill="#808080"/>
<rect x="28" y="177" width="1" height="1" fill="#808080"/>
<rect x="28" y="179" width="1" height="1" fill="#808080"/>
<rect x="28" y="181" width="1" height="1" fill="#808080"/>
<rect x="28" y="183" width="1" height="1" fill="#808080"/>
<rect x="28" y="185" width="1" height="1" fill="#808080"/>
<rect x="28" y="187" width="1" height="1" fill="#808080"/>
<rect x="28" y="189" width="1" height="1" fill="#808080"/>
<rect x="28" y="191" width="1" height="1" fill="#808080"/>
<rect x="28" y="193" width="1" height="1" fill="#808080"/>
<rect x="28" y="195" width="1" height="1" fill="#808080"/>
<rect x="28" y="197" width="1" height="1" fill="#808080"/>
<rect x="28" y="199" width="1" height="1" fill="#808080"/>
<rect x="28" y="201" width="1" height="1" fill="#808080"/>
<rect x="28" y="203" width="1" height="1" fill="#808080"/>
<rect x="28" y="205" width="1" height="1" fill="#808080"/>
<rect x="28" y="207" width="1" height="1" fill="#808080"/>
<rect x="28" y="209" width="1" height="1" fill="#808080"/>
<rect x="28" y="211" width="1" height="1" fill="#808080"/>
<rect x="28" y="213" width="1" height="1" fill="#808080"/>
<rect x="28" y="215" width="1" height="1" fill="#808080"/>
<rect x="28" y="217" width="1" height="1" fill="#808080"/>
<rect x="28" y="219" width="1" height="1" fill="#808080"/>
<rect x="28" y="221" width="1" height="1" fill="#808080"/>
<rect x="28" y="223" width="1" height="1" fill="#808080"/>
<rect x="28" y="225" width="1" height="1" fill="#808080"/>
<rect x="28" y="227" width="1" height="1" fill="#808080"/>
<rect x="28" y="229" width="1" height="1" fill="#808080"/>
<rect x="28" y="231" width="1" height="1" fill="#808080"/>
<rect x="28" y="233" width="1" height="1" fill="#808080"/>
<rect x="28" y="235" width="1" height="1" fill="#808080"/>
<rect x="28" y="237" width="1" height="1" fill="#808080"/>
<rect x="28" y="239" width="1" height="1" fill="#808080"/>
<rect x="28" y="241" width="1" height="1" fill="#808080"/>
<rect x="28" y="243" width="1" height="1" fill="#808080"/>
<rect x="47" y="107" width="1" height="1" fill="#808080"/>
<rect x="47" y="109" width="1" height="1" fill="#808080"/>
<rect x="47" y="111" width="1" height="1" fill="#808080"/>
<rect x="47" y="113" width="1" height="1" fill="#808080"/>
<rect x="47" y="115" width="1" height="1" fill="#808080"/>
<rect x="47" y="117" width="1" height="1" fill="#808080"/>
<rect x="47" y="119" width="1" height="1" fill="#808080"/>
<rect x="47" y="121" width="1" height="1" fill="#808080"/>
<rect x="47" y="123" width="1" height="1" fill="#808080"/>
<rect x="47" y="125" width="1" height="1" fill="#808080"/>
<rect x="47" y="127" width="1" height="1" fill="#808080"/>
<rect x="47" y="129" width="1" height="1" fill="#808080"/>
<rect x="47" y="131" width="1" height="1" fill="#808080"/>
<rect x="47" y="133" width="1" height="1" fill="#808080"/>
<rect x="47" y="135" width="1" height="1" fill="#808080"/>
<rect x="47" y="137" width="1" height="1" fill="#808080"/>
<rect x="47" y="139" width="1" height="1" fill="#808080"/>
<rect x="47" y="141" width="1" height="1" fill="#808080"/>
<rect x="47" y="143" width="1" height="1" fill="#808080"/>
<rect x="47" y="145" width="1" height="1" fill="#808080"/>
<rect x="47" y="147" width="1" height="1" fill="#808080"/>
<rect x="66" y="123" width="1" height="1" fill="#808080"/>
<rect x="66" y="125" width="1" height="1" fill="#808080"/>
<rect x="66" y="127" width="1" height="1" fill="#808080"/>
<rect x="66" y="129" width="1" height="1" fill="#808080"/>
<rect x="66" y="131" width="1" height="1" fill="#808080"/>
<rect x="66" y="155" width="1" height="1" fill="#808080"/>
<rect x="66" y="157" width="1" height="1" fill="#808080"/>
<rect x="66" y="159" width="1" height="1" fill="#808080"/>
<rect x="66" y="161" width="1" height="1" fill="#808080"/>
<rect x="66" y="163" width="1" height="1" fill="#808080"/>
<rect x="47" y="219" width="1" height="1" fill="#808080"/>
<rect x="47" y="221" width="1" height="1" fill="#808080"/>
<rect x="47" y="223" width="1" height="1" fill="#808080"/>
<rect x="47" y="225" width="1" height="1" fill="#808080"/>
<rect x="47" y="227" width="1" height="1" fill="#808080"/>
<rect x="15" y="67" width="1" height="1" fill="#808080"/>
<rect x="17" y="67" width="1" height="1" fill="#808080"/>
<rect x="19" y="67" width="1" height="1" fill="#808080"/>
<rect x="5.5" y="63.5" width="8" height="8" fill="#fff" stroke="#808080" stroke-width="1"/>
<rect x="7" y="67" width="5" height="1" fill="#000"/>
<rect x="23" y="60" width="11" height="1" fill="#000"/>
<rect x="22" y="61" width="13" height="1" fill="#000"/>
<rect x="21" y="62" width="2" height="1" fill="#000"/>
<rect x="23" y="62" width="1" height="1" fill="#00e000"/>
<rect x="24" y="62" width="1" height="1" fill="#000"/>
<rect x="25" y="62" width="1" height="1" fill="#00e000"/>
<rect x="26" y="62" width="1" height="1" fill="#000"/>
<rect x="27" y="62" width="1" height="1" fill="#00e000"/>
<rect x="28" y="62" width="1" height="1" fill="#000"/>
<rect x="29" y="62" width="1" height="1" fill="#00e000"/>
<rect x="30" y="62" width="1" height="1" fill="#000"/>
<rect x="31" y="62" width="1" height="1" fill="#00e000"/>
<rect x="32" y="62" width="1" height="1" fill="#000"/>
<rect x="33" y="62" width="1" height="1" fill="#00e000"/>
<rect x="34" y="62" width="2" height="1" fill="#000"/>
<rect x="21" y="63" width="1" height="1" fill="#000"/>
<rect x="22" y="63" width="1" height="1" fill="#00e000"/>
<rect x="23" y="63" width="1" height="1" fill="#000"/>
<rect x="24" y="63" width="1" height="1" fill="#00e000"/>
<rect x="25" y="63" width="1" height="1" fill="#000"/>
<rect x="26" y="63" width="1" height="1" fill="#00e000"/>
<rect x="27" y="63" width="1" height="1" fill="#000"/>
<rect x="28" y="63" width="1" height="1" fill="#00e000"/>
<rect x="29" y="63" width="1" height="1" fill="#000"/>
<rect x="30" y="63" width="1" height="1" fill="#00e000"/>
<rect x="31" y="63" width="1" height="1" fill="#000"/>
<rect x="32" y="63" width="1" height="1" fill="#00e000"/>
<rect x="33" y="63" width="1" height="1" fill="#000"/>
<rect x="34" y="63" width="1" height="1" fill="#00e000"/>
<rect x="35" y="63" width="1" height="1" fill="#000"/>
<rect x="21" y="64" width="1" height="1" fill="#000"/>
<rect x="22" y="64" width="1" height="1" fill="#c0c0c0"/>
<rect x="23" y="64" width="1" height="1" fill="#fff"/>
<rect x="24" y="64" width="1" height="1" fill="#c0c0c0"/>
<rect x="25" y="64" width="1" height="1" fill="#fff"/>
<rect x="26" y="64" width="1" height="1" fill="#c0c0c0"/>
<rect x="27" y="64" width="1" height="1" fill="#fff"/>
<rect x="28" y="64" width="1" height="1" fill="#c0c0c0"/>
<rect x="29" y="64" width="1" height="1" fill="#fff"/>
<rect x="30" y="64" width="1" height="1" fill="#c0c0c0"/>
<rect x="31" y="64" width="1" height="1" fill="#fff"/>
<rect x="32" y="64" width="1" height="1" fill="#c0c0c0"/>
<rect x="33" y="64" width="1" height="1" fill="#fff"/>
<rect x="34" y="64" width="1" height="1" fill="#c0c0c0"/>
<rect x="35" y="64" width="1" height="1" fill="#000"/>
<rect x="21" y="65" width="1" height="1" fill="#000"/>
<rect x="22" y="65" width="1" height="1" fill="#fff"/>
<rect x="23" y="65" width="1" height="1" fill="#c0c0c0"/>
<rect x="24" y="65" width="1" height="1" fill="#fff"/>
<rect x="25" y="65" width="7" height="1" fill="#0000ff"/>
<rect x="32" y="65" width="1" height="1" fill="#c0c0c0"/>
<rect x="33" y="65" width="1" height="1" fill="#fff"/>
<rect x="34" y="65" width="1" height="1" fill="#c0c0c0"/>
<rect x="35" y="65" width="1" height="1" fill="#000"/>
<rect x="21" y="66" width="1" height="1" fill="#000"/>
<rect x="22" y="66" width="1" height="1" fill="#c0c0c0"/>
<rect x="23" y="66" width="1" height="1" fill="#fff"/>
<rect x="24" y="66" width="1" height="1" fill="#0000ff"/>
<rect x="25" y="66" width="1" height="1" fill="#fff"/>
<rect x="26" y="66" width="1" height="1" fill="#c0c0c0"/>
<rect x="27" y="66" width="1" height="1" fill="#0000ff"/>
<rect x="28" y="66" width="1" height="1" fill="#c0c0c0"/>
<rect x="29" y="66" width="1" height="1" fill="#fff"/>
<rect x="30" y="66" width="1" height="1" fill="#c0c0c0"/>
<rect x="31" y="66" width="1" height="1" fill="#0000ff"/>
<rect x="32" y="66" width="1" height="1" fill="#fff"/>
<rect x="33" y="66" width="1" height="1" fill="#c0c0c0"/>
<rect x="34" y="66" width="1" height="1" fill="#fff"/>
<rect x="35" y="66" width="1" height="1" fill="#000"/>
<rect x="21" y="67" width="1" height="1" fill="#000"/>
<rect x="22" y="67" width="1" height="1" fill="#fff"/>
<rect x="23" y="67" width="1" height="1" fill="#c0c0c0"/>
<rect x="24" y="67" width="1" height="1" fill="#fff"/>
<rect x="25" y="67" width="1" height="1" fill="#c0c0c0"/>
<rect x="26" y="67" width="1" height="1" fill="#fff"/>
<rect x="27" y="67" width="1" height="1" fill="#c0c0c0"/>
<rect x="28" y="67" width="1" height="1" fill="#fff"/>
<rect x="29" y="67" width="1" height="1" fill="#c0c0c0"/>
<rect x="30" y="67" width="1" height="1" fill="#fff"/>
<rect x="31" y="67" width="1" height="1" fill="#c0c0c0"/>
<rect x="32" y="67" width="1" height="1" fill="#fff"/>
<rect x="33" y="67" width="1" height="1" fill="#c0c0c0"/>
<rect x="34" y="67" width="1" height="1" fill="#fff"/>
<rect x="35" y="67" width="1" height="1" fill="#000"/>
<rect x="21" y="68" width="1" height="1" fill="#000"/>
<rect x="22" y="68" width="1" height="1" fill="#c0c0c0"/>
<rect x="23" y="68" width="1" height="1" fill="#fff"/>
<rect x="24" y="68" width="1" height="1" fill="#00ffff"/>
<rect x="25" y="68" width="1" height="1" fill="#c0c0c0"/>
<rect x="26" y="68" width="1" height="1" fill="#fff"/>
<rect x="27" y="68" width="1" height="1" fill="#c0c0c0"/>
<rect x="28" y="68" width="1" height="1" fill="#fff"/>
<rect x="29" y="68" width="1" height="1" fill="#c0c0c0"/>
<rect x="30" y="68" width="1" height="1" fill="#fff"/>
<rect x="31" y="68" width="1" height="1" fill="#c0c0c0"/>
<rect x="32" y="68" width="1" height="1" fill="#fff"/>
<rect x="33" y="68" width="1" height="1" fill="#c0c0c0"/>
<rect x="34" y="68" width="1" height="1" fill="#fff"/>
<rect x="35" y="68" width="1" height="1" fill="#000"/>
<rect x="21" y="69" width="1" height="1" fill="#000"/>
<rect x="22" y="69" width="1" height="1" fill="#fff"/>
<rect x="23" y="69" width="1" height="1" fill="#ff0000"/>
<rect x="24" y="69" width="1" height="1" fill="#c0c0c0"/>
<rect x="25" y="69" width="1" height="1" fill="#fff"/>
<rect x="26" y="69" width="1" height="1" fill="#c0c0c0"/>
<rect x="27" y="69" width="1" height="1" fill="#fff"/>
<rect x="28" y="69" width="1" height="1" fill="#c0c0c0"/>
<rect x="29" y="69" width="1" height="1" fill="#fff"/>
<rect x="30" y="69" width="1" height="1" fill="#c0c0c0"/>
<rect x="31" y="69" width="1" height="1" fill="#fff"/>
<rect x="32" y="69" width="1" height="1" fill="#c0c0c0"/>
<rect x="33" y="69" width="1" height="1" fill="#fff"/>
<rect x="34" y="69" width="1" height="1" fill="#c0c0c0"/>
<rect x="35" y="69" width="1" height="1" fill="#000"/>
<rect x="21" y="70" width="1" height="1" fill="#000"/>
<rect x="22" y="70" width="1" height="1" fill="#00e000"/>
<rect x="23" y="70" width="1" height="1" fill="#000"/>
<rect x="24" y="70" width="1" height="1" fill="#00e000"/>
<rect x="25" y="70" width="1" height="1" fill="#000"/>
<rect x="26" y="70" width="1" height="1" fill="#00e000"/>
<rect x="27" y="70" width="1" height="1" fill="#000"/>
<rect x="28" y="70" width="1" height="1" fill="#00e000"/>
<rect x="29" y="70" width="1" height="1" fill="#000"/>
<rect x="30" y="70" width="1" height="1" fill="#00e000"/>
<rect x="31" y="70" width="1" height="1" fill="#000"/>
<rect x="32" y="70" width="1" height="1" fill="#00e000"/>
<rect x="33" y="70" width="1" height="1" fill="#000"/>
<rect x="34" y="70" width="1" height="1" fill="#00e000"/>
<rect x="35" y="70" width="1" height="1" fill="#000"/>
<rect x="21" y="71" width="2" height="1" fill="#000"/>
<rect x="23" y="71" width="1" height="1" fill="#00e000"/>
<rect x="24" y="71" width="1" height="1" fill="#000"/>
<rect x="25" y="71" width="1" height="1" fill="#00e000"/>
<rect x="26" y="71" width="1" height="1" fill="#000"/>
<rect x="27" y="71" width="1" height="1" fill="#00e000"/>
<rect x="28" y="71" width="1" height="1" fill="#000"/>
<rect x="29" y="71" width="1" height="1" fill="#00e000"/>
<rect x="30" y="71" width="1" height="1" fill="#000"/>
<rect x="31" y="71" width="1" height="1" fill="#00e000"/>
<rect x="32" y="71" width="1" height="1" fill="#000"/>
<rect x="33" y="71" width="1" height="1" fill="#00e000"/>
<rect x="34" y="71" width="2" height="1" fill="#000"/>
<rect x="22" y="72" width="13" height="1" fill="#000"/>
<rect x="23" y="73" width="11" height="1" fill="#000"/>
<rect x="34" y="83" width="1" height="1" fill="#808080"/>
<rect x="36" y="83" width="1" height="1" fill="#808080"/>
<rect x="38" y="83" width="1" height="1" fill="#808080"/>
<rect x="24.5" y="79.5" width="8" height="8" fill="#fff" stroke="#808080" stroke-width="1"/>
<rect x="26" y="83" width="5" height="1" fill="#000"/>
<rect x="28" y="81" width="1" height="5" fill="#000"/>
<rect x="51" y="77" width="2" height="1" fill="#000"/>
<rect x="41" y="78" width="2" height="1" fill="#c0c0c0"/>
<rect x="43" y="78" width="4" height="1" fill="#808080"/>
<rect x="51" y="78" width="1" height="1" fill="#000"/>
<rect x="52" y="78" width="1" height="1" fill="#fff"/>
<rect x="53" y="78" width="1" height="1" fill="#000"/>
<rect x="40" y="79" width="1" height="1" fill="#c0c0c0"/>
<rect x="41" y="79" width="6" height="1" fill="#fff"/>
<rect x="47" y="79" width="1" height="1" fill="#c0c0c0"/>
<rect x="48" y="79" width="1" height="1" fill="#000"/>
<rect x="51" y="79" width="1" height="1" fill="#000"/>
<rect x="52" y="79" width="1" height="1" fill="#c0c0c0"/>
<rect x="53" y="79" width="1" height="1" fill="#000"/>
<rect x="41" y="80" width="6" height="1" fill="#808080"/>
<rect x="47" y="80" width="2" height="1" fill="#000"/>
<rect x="51" y="80" width="3" height="1" fill="#000"/>
<rect x="45" y="81" width="1" height="1" fill="#000"/>
<rect x="46" y="81" width="1" height="1" fill="#808080"/>
<rect x="47" y="81" width="1" height="1" fill="#000"/>
<rect x="52" y="81" width="1" height="1" fill="#000"/>
<rect x="45" y="82" width="1" height="1" fill="#000"/>
<rect x="46" y="82" width="1" height="1" fill="#808080"/>
<rect x="47" y="82" width="1" height="1" fill="#000"/>
<rect x="52" y="82" width="1" height="1" fill="#000"/>
<rect x="45" y="83" width="1" height="1" fill="#000"/>
<rect x="46" y="83" width="1" height="1" fill="#808080"/>
<rect x="47" y="83" width="1" height="1" fill="#000"/>
<rect x="52" y="83" width="1" height="1" fill="#000"/>
<rect x="45" y="84" width="1" height="1" fill="#000"/>
<rect x="46" y="84" width="1" height="1" fill="#808080"/>
<rect x="47" y="84" width="1" height="1" fill="#000"/>
<rect x="52" y="84" width="1" height="1" fill="#000"/>
<rect x="45" y="85" width="3" height="1" fill="#000"/>
<rect x="51" y="85" width="3" height="1" fill="#000"/>
<rect x="45" y="86" width="2" height="1" fill="#00ffff"/>
<rect x="47" y="86" width="1" height="1" fill="#000"/>
<rect x="51" y="86" width="2" height="1" fill="#ff0000"/>
<rect x="53" y="86" width="1" height="1" fill="#000"/>
<rect x="45" y="87" width="2" height="1" fill="#00ffff"/>
<rect x="47" y="87" width="1" height="1" fill="#000"/>
<rect x="51" y="87" width="2" height="1" fill="#ff0000"/>
<rect x="53" y="87" width="1" height="1" fill="#000"/>
<rect x="45" y="88" width="2" height="1" fill="#00ffff"/>
<rect x="47" y="88" width="1" height="1" fill="#000"/>
<rect x="51" y="88" width="2" height="1" fill="#ff0000"/>
<rect x="53" y="88" width="1" height="1" fill="#000"/>
<rect x="45" y="89" width="3" height="1" fill="#000"/>
<rect x="51" y="89" width="3" height="1" fill="#000"/>
<rect x="34" y="99" width="1" height="1" fill="#808080"/>
<rect x="36" y="99" width="1" height="1" fill="#808080"/>
<rect x="38" y="99" width="1" height="1" fill="#808080"/>
<rect x="24.5" y="95.5" width="8" height="8" fill="#fff" stroke="#808080" stroke-width="1"/>
<rect x="26" y="99" width="5" height="1" fill="#000"/>
<rect x="40" y="92" width="13" height="1" fill="#808080"/>
<rect x="53" y="92" width="1" height="1" fill="#000"/>
<rect x="40" y="93" width="1" height="1" fill="#808080"/>
<rect x="41" y="93" width="12" height="1" fill="#fff"/>
<rect x="53" y="93" width="1" height="1" fill="#000"/>
<rect x="40" y="94" width="1" height="1" fill="#808080"/>
<rect x="41" y="94" width="1" height="1" fill="#fff"/>
<rect x="42" y="94" width="1" height="1" fill="#000080"/>
<rect x="43" y="94" width="1" height="1" fill="#fff"/>
<rect x="44" y="94" width="1" height="1" fill="#000080"/>
<rect x="45" y="94" width="1" height="1" fill="#fff"/>
<rect x="46" y="94" width="3" height="1" fill="#000080"/>
<rect x="49" y="94" width="1" height="1" fill="#fff"/>
<rect x="50" y="94" width="1" height="1" fill="#000080"/>
<rect x="51" y="94" width="1" height="1" fill="#fff"/>
<rect x="52" y="94" width="1" height="1" fill="#000080"/>
<rect x="53" y="94" width="1" height="1" fill="#000"/>
<rect x="40" y="95" width="1" height="1" fill="#808080"/>
<rect x="41" y="95" width="1" height="1" fill="#fff"/>
<rect x="42" y="95" width="3" height="1" fill="#000080"/>
<rect x="45" y="95" width="1" height="1" fill="#fff"/>
<rect x="46" y="95" width="1" height="1" fill="#000080"/>
<rect x="47" y="95" width="1" height="1" fill="#fff"/>
<rect x="48" y="95" width="1" height="1" fill="#000080"/>
<rect x="49" y="95" width="1" height="1" fill="#fff"/>
<rect x="50" y="95" width="2" height="1" fill="#000080"/>
<rect x="52" y="95" width="1" height="1" fill="#fff"/>
<rect x="53" y="95" width="1" height="1" fill="#000"/>
<rect x="40" y="96" width="1" height="1" fill="#808080"/>
<rect x="41" y="96" width="1" height="1" fill="#fff"/>
<rect x="42" y="96" width="1" height="1" fill="#000080"/>
<rect x="43" y="96" width="1" height="1" fill="#fff"/>
<rect x="44" y="96" width="1" height="1" fill="#000080"/>
<rect x="45" y="96" width="1" height="1" fill="#fff"/>
<rect x="46" y="96" width="1" height="1" fill="#000080"/>
<rect x="47" y="96" width="1" height="1" fill="#fff"/>
<rect x="48" y="96" width="1" height="1" fill="#000080"/>
<rect x="49" y="96" width="2" height="1" fill="#fff"/>
<rect x="51" y="96" width="1" height="1" fill="#000080"/>
<rect x="52" y="96" width="1" height="1" fill="#fff"/>
<rect x="53" y="96" width="1" height="1" fill="#000"/>
<rect x="40" y="97" width="1" height="1" fill="#808080"/>
<rect x="41" y="97" width="1" height="1" fill="#fff"/>
<rect x="42" y="97" width="1" height="1" fill="#000080"/>
<rect x="43" y="97" width="1" height="1" fill="#fff"/>
<rect x="44" y="97" width="3" height="1" fill="#000080"/>
<rect x="47" y="97" width="1" height="1" fill="#fff"/>
<rect x="48" y="97" width="1" height="1" fill="#000080"/>
<rect x="49" y="97" width="4" height="1" fill="#fff"/>
<rect x="53" y="97" width="1" height="1" fill="#000"/>
<rect x="40" y="98" width="1" height="1" fill="#808080"/>
<rect x="41" y="98" width="1" height="1" fill="#fff"/>
<rect x="42" y="98" width="1" height="1" fill="#000080"/>
<rect x="43" y="98" width="1" height="1" fill="#fff"/>
<rect x="44" y="98" width="1" height="1" fill="#000080"/>
<rect x="45" y="98" width="1" height="1" fill="#fff"/>
<rect x="46" y="98" width="2" height="1" fill="#000080"/>
<rect x="48" y="98" width="3" height="1" fill="#fff"/>
<rect x="51" y="98" width="1" height="1" fill="#808080"/>
<rect x="52" y="98" width="1" height="1" fill="#fff"/>
<rect x="53" y="98" width="1" height="1" fill="#000"/>
<rect x="40" y="99" width="1" height="1" fill="#808080"/>
<rect x="41" y="99" width="1" height="1" fill="#fff"/>
<rect x="42" y="99" width="1" height="1" fill="#000080"/>
<rect x="43" y="99" width="1" height="1" fill="#fff"/>
<rect x="44" y="99" width="1" height="1" fill="#000080"/>
<rect x="45" y="99" width="1" height="1" fill="#fff"/>
<rect x="46" y="99" width="1" height="1" fill="#000080"/>
<rect x="47" y="99" width="6" height="1" fill="#fff"/>
<rect x="53" y="99" width="1" height="1" fill="#000"/>
<rect x="40" y="100" width="1" height="1" fill="#808080"/>
<rect x="41" y="100" width="1" height="1" fill="#fff"/>
<rect x="42" y="100" width="1" height="1" fill="#000080"/>
<rect x="43" y="100" width="1" height="1" fill="#fff"/>
<rect x="44" y="100" width="8" height="1" fill="#c0c0c0"/>
<rect x="52" y="100" width="1" height="1" fill="#fff"/>
<rect x="53" y="100" width="1" height="1" fill="#000"/>
<rect x="40" y="101" width="1" height="1" fill="#808080"/>
<rect x="41" y="101" width="1" height="1" fill="#fff"/>
<rect x="42" y="101" width="1" height="1" fill="#000080"/>
<rect x="43" y="101" width="1" height="1" fill="#fff"/>
<rect x="44" y="101" width="1" height="1" fill="#ffff00"/>
<rect x="45" y="101" width="1" height="1" fill="#fff"/>
<rect x="46" y="101" width="1" height="1" fill="#ffff00"/>
<rect x="47" y="101" width="1" height="1" fill="#fff"/>
<rect x="48" y="101" width="1" height="1" fill="#ffff00"/>
<rect x="49" y="101" width="1" height="1" fill="#fff"/>
<rect x="50" y="101" width="1" height="1" fill="#ffff00"/>
<rect x="51" y="101" width="1" height="1" fill="#c0c0c0"/>
<rect x="52" y="101" width="1" height="1" fill="#fff"/>
<rect x="53" y="101" width="1" height="1" fill="#000"/>
<rect x="40" y="102" width="1" height="1" fill="#808080"/>
<rect x="41" y="102" width="1" height="1" fill="#fff"/>
<rect x="42" y="102" width="1" height="1" fill="#000080"/>
<rect x="43" y="102" width="1" height="1" fill="#c0c0c0"/>
<rect x="44" y="102" width="7" height="1" fill="#ffff00"/>
<rect x="51" y="102" width="1" height="1" fill="#c0c0c0"/>
<rect x="52" y="102" width="1" height="1" fill="#fff"/>
<rect x="53" y="102" width="1" height="1" fill="#000"/>
<rect x="40" y="103" width="1" height="1" fill="#808080"/>
<rect x="41" y="103" width="2" height="1" fill="#fff"/>
<rect x="43" y="103" width="9" height="1" fill="#c0c0c0"/>
<rect x="52" y="103" width="1" height="1" fill="#fff"/>
<rect x="53" y="103" width="1" height="1" fill="#000"/>
<rect x="40" y="104" width="1" height="1" fill="#808080"/>
<rect x="41" y="104" width="12" height="1" fill="#fff"/>
<rect x="53" y="104" width="1" height="1" fill="#000"/>
<rect x="40" y="105" width="14" height="1" fill="#000"/>
<rect x="53" y="115" width="1" height="1" fill="#808080"/>
<rect x="55" y="115" width="1" height="1" fill="#808080"/>
<rect x="57" y="115" width="1" height="1" fill="#808080"/>
<rect x="43.5" y="111.5" width="8" height="8" fill="#fff" stroke="#808080" stroke-width="1"/>
<rect x="45" y="115" width="5" height="1" fill="#000"/>
<rect x="65" y="107" width="3" height="1" fill="#000"/>
<rect x="59" y="108" width="7" height="1" fill="#000"/>
<rect x="66" y="108" width="1" height="1" fill="#ff0000"/>
<rect x="67" y="108" width="1" height="1" fill="#000"/>
<rect x="59" y="109" width="2" height="1" fill="#000"/>
<rect x="65" y="109" width="3" height="1" fill="#000"/>
<rect x="59" y="110" width="2" height="1" fill="#000"/>
<rect x="66" y="110" width="1" height="1" fill="#000"/>
<rect x="59" y="111" width="2" height="1" fill="#000"/>
<rect x="62" y="111" width="10" height="1" fill="#000"/>
<rect x="59" y="112" width="2" height="1" fill="#000"/>
<rect x="62" y="112" width="1" height="1" fill="#000"/>
<rect x="66" y="112" width="1" height="1" fill="#000"/>
<rect x="70" y="112" width="1" height="1" fill="#000"/>
<rect x="59" y="113" width="5" height="1" fill="#000"/>
<rect x="65" y="113" width="3" height="1" fill="#000"/>
<rect x="69" y="113" width="3" height="1" fill="#000"/>
<rect x="59" y="114" width="3" height="1" fill="#000"/>
<rect x="62" y="114" width="1" height="1" fill="#00e000"/>
<rect x="63" y="114" width="1" height="1" fill="#000"/>
<rect x="65" y="114" width="1" height="1" fill="#000"/>
<rect x="66" y="114" width="1" height="1" fill="#00e000"/>
<rect x="67" y="114" width="1" height="1" fill="#000"/>
<rect x="69" y="114" width="1" height="1" fill="#000"/>
<rect x="70" y="114" width="1" height="1" fill="#00e000"/>
<rect x="71" y="114" width="1" height="1" fill="#000"/>
<rect x="59" y="115" width="2" height="1" fill="#000"/>
<rect x="62" y="115" width="2" height="1" fill="#000"/>
<rect x="65" y="115" width="3" height="1" fill="#000"/>
<rect x="69" y="115" width="3" height="1" fill="#000"/>
<rect x="59" y="116" width="2" height="1" fill="#000"/>
<rect x="63" y="116" width="1" height="1" fill="#000"/>
<rect x="67" y="116" width="1" height="1" fill="#000"/>
<rect x="71" y="116" width="1" height="1" fill="#000"/>
<rect x="59" y="117" width="13" height="1" fill="#000"/>
<rect x="66" y="118" width="2" height="1" fill="#000080"/>
<rect x="69" y="118" width="2" height="1" fill="#000080"/>
<rect x="66" y="119" width="2" height="1" fill="#000080"/>
<rect x="69" y="119" width="2" height="1" fill="#000080"/>
<rect x="64" y="120" width="4" height="1" fill="#000080"/>
<rect x="69" y="120" width="4" height="1" fill="#000080"/>
<rect x="66" y="121" width="2" height="1" fill="#000080"/>
<rect x="69" y="121" width="2" height="1" fill="#000080"/>
<rect x="66" y="122" width="2" height="1" fill="#000080"/>
<rect x="69" y="122" width="2" height="1" fill="#000080"/>
<rect x="67" y="131" width="1" height="1" fill="#808080"/>
<rect x="69" y="131" width="1" height="1" fill="#808080"/>
<rect x="71" y="131" width="1" height="1" fill="#808080"/>
<rect x="73" y="131" width="1" height="1" fill="#808080"/>
<rect x="75" y="131" width="1" height="1" fill="#808080"/>
<rect x="78" y="125" width="1" height="1" fill="#000080"/>
<rect x="85" y="125" width="2" height="1" fill="#000080"/>
<rect x="88" y="125" width="2" height="1" fill="#000080"/>
<rect x="76" y="126" width="1" height="1" fill="#000080"/>
<rect x="78" y="126" width="1" height="1" fill="#000080"/>
<rect x="85" y="126" width="1" height="1" fill="#000080"/>
<rect x="89" y="126" width="1" height="1" fill="#000080"/>
<rect x="75" y="127" width="2" height="1" fill="#000080"/>
<rect x="78" y="127" width="8" height="1" fill="#000080"/>
<rect x="89" y="127" width="1" height="1" fill="#000080"/>
<rect x="76" y="128" width="1" height="1" fill="#000080"/>
<rect x="78" y="128" width="1" height="1" fill="#000080"/>
<rect x="81" y="128" width="1" height="1" fill="#000080"/>
<rect x="85" y="128" width="1" height="1" fill="#000080"/>
<rect x="89" y="128" width="1" height="1" fill="#000080"/>
<rect x="78" y="129" width="1" height="1" fill="#000080"/>
<rect x="81" y="129" width="1" height="1" fill="#000080"/>
<rect x="85" y="129" width="2" height="1" fill="#000080"/>
<rect x="88" y="129" width="2" height="1" fill="#000080"/>
<rect x="78" y="130" width="1" height="1" fill="#000080"/>
<rect x="81" y="130" width="1" height="1" fill="#000080"/>
<rect x="75" y="131" width="2" height="1" fill="#000080"/>
<rect x="78" y="131" width="4" height="1" fill="#000080"/>
<rect x="76" y="132" width="1" height="1" fill="#000080"/>
<rect x="78" y="132" width="1" height="1" fill="#000080"/>
<rect x="78" y="133" width="1" height="1" fill="#000080"/>
<rect x="85" y="133" width="2" height="1" fill="#000080"/>
<rect x="88" y="133" width="2" height="1" fill="#000080"/>
<rect x="76" y="134" width="1" height="1" fill="#000080"/>
<rect x="78" y="134" width="1" height="1" fill="#000080"/>
<rect x="85" y="134" width="1" height="1" fill="#000080"/>
<rect x="89" y="134" width="1" height="1" fill="#000080"/>
<rect x="75" y="135" width="2" height="1" fill="#000080"/>
<rect x="78" y="135" width="8" height="1" fill="#000080"/>
<rect x="89" y="135" width="1" height="1" fill="#000080"/>
<rect x="76" y="136" width="1" height="1" fill="#000080"/>
<rect x="78" y="136" width="1" height="1" fill="#000080"/>
<rect x="85" y="136" width="1" height="1" fill="#000080"/>
<rect x="89" y="136" width="1" height="1" fill="#000080"/>
<rect x="78" y="137" width="1" height="1" fill="#000080"/>
<rect x="85" y="137" width="2" height="1" fill="#000080"/>
<rect x="88" y="137" width="2" height="1" fill="#000080"/>
<rect x="53" y="147" width="1" height="1" fill="#808080"/>
<rect x="55" y="147" width="1" height="1" fill="#808080"/>
<rect x="57" y="147" width="1" height="1" fill="#808080"/>
<rect x="43.5" y="143.5" width="8" height="8" fill="#fff" stroke="#808080" stroke-width="1"/>
<rect x="45" y="147" width="5" height="1" fill="#000"/>
<rect x="59" y="140" width="4" height="1" fill="#000"/>
<rect x="65" y="140" width="1" height="1" fill="#000"/>
<rect x="69" y="140" width="4" height="1" fill="#000"/>
<rect x="59" y="141" width="1" height="1" fill="#000"/>
<rect x="65" y="141" width="1" height="1" fill="#000"/>
<rect x="71" y="141" width="1" height="1" fill="#000"/>
<rect x="59" y="142" width="4" height="1" fill="#000"/>
<rect x="64" y="142" width="4" height="1" fill="#000"/>
<rect x="70" y="142" width="3" height="1" fill="#000"/>
<rect x="59" y="143" width="1" height="1" fill="#000"/>
<rect x="65" y="143" width="1" height="1" fill="#000"/>
<rect x="59" y="144" width="3" height="1" fill="#000"/>
<rect x="64" y="144" width="3" height="1" fill="#000"/>
<rect x="59" y="145" width="1" height="1" fill="#000"/>
<rect x="65" y="145" width="1" height="1" fill="#000"/>
<rect x="59" y="146" width="4" height="1" fill="#000"/>
<rect x="64" y="146" width="3" height="1" fill="#000"/>
<rect x="59" y="147" width="1" height="1" fill="#000"/>
<rect x="64" y="147" width="1" height="1" fill="#000"/>
<rect x="59" y="148" width="5" height="1" fill="#000"/>
<rect x="66" y="149" width="2" height="1" fill="#000080"/>
<rect x="69" y="149" width="2" height="1" fill="#000080"/>
<rect x="66" y="150" width="2" height="1" fill="#000080"/>
<rect x="69" y="150" width="2" height="1" fill="#000080"/>
<rect x="64" y="151" width="4" height="1" fill="#000080"/>
<rect x="69" y="151" width="4" height="1" fill="#000080"/>
<rect x="66" y="152" width="2" height="1" fill="#000080"/>
<rect x="69" y="152" width="2" height="1" fill="#000080"/>
<rect x="66" y="153" width="2" height="1" fill="#000080"/>
<rect x="69" y="153" width="2" height="1" fill="#000080"/>
<rect x="67" y="163" width="1" height="1" fill="#808080"/>
<rect x="69" y="163" width="1" height="1" fill="#808080"/>
<rect x="71" y="163" width="1" height="1" fill="#808080"/>
<rect x="73" y="163" width="1" height="1" fill="#808080"/>
<rect x="75" y="163" width="1" height="1" fill="#808080"/>
<rect x="78" y="157" width="1" height="1" fill="#000080"/>
<rect x="85" y="157" width="2" height="1" fill="#000080"/>
<rect x="88" y="157" width="2" height="1" fill="#000080"/>
<rect x="76" y="158" width="1" height="1" fill="#000080"/>
<rect x="78" y="158" width="1" height="1" fill="#000080"/>
<rect x="85" y="158" width="1" height="1" fill="#000080"/>
<rect x="89" y="158" width="1" height="1" fill="#000080"/>
<rect x="75" y="159" width="2" height="1" fill="#000080"/>
<rect x="78" y="159" width="8" height="1" fill="#000080"/>
<rect x="89" y="159" width="1" height="1" fill="#000080"/>
<rect x="76" y="160" width="1" height="1" fill="#000080"/>
<rect x="78" y="160" width="1" height="1" fill="#000080"/>
<rect x="81" y="160" width="1" height="1" fill="#000080"/>
<rect x="85" y="160" width="1" height="1" fill="#000080"/>
<rect x="89" y="160" width="1" height="1" fill="#000080"/>
<rect x="78" y="161" width="1" height="1" fill="#000080"/>
<rect x="81" y="161" width="1" height="1" fill="#000080"/>
<rect x="85" y="161" width="2" height="1" fill="#000080"/>
<rect x="88" y="161" width="2" height="1" fill="#000080"/>
<rect x="78" y="162" width="1" height="1" fill="#000080"/>
<rect x="81" y="162" width="1" height="1" fill="#000080"/>
<rect x="75" y="163" width="2" height="1" fill="#000080"/>
<rect x="78" y="163" width="4" height="1" fill="#000080"/>
<rect x="76" y="164" width="1" height="1" fill="#000080"/>
<rect x="78" y="164" width="1" height="1" fill="#000080"/>
<rect x="78" y="165" width="1" height="1" fill="#000080"/>
<rect x="85" y="165" width="2" height="1" fill="#000080"/>
<rect x="88" y="165" width="2" height="1" fill="#000080"/>
<rect x="76" y="166" width="1" height="1" fill="#000080"/>
<rect x="78" y="166" width="1" height="1" fill="#000080"/>
<rect x="85" y="166" width="1" height="1" fill="#000080"/>
<rect x="89" y="166" width="1" height="1" fill="#000080"/>
<rect x="75" y="167" width="2" height="1" fill="#000080"/>
<rect x="78" y="167" width="8" height="1" fill="#000080"/>
<rect x="89" y="167" width="1" height="1" fill="#000080"/>
<rect x="76" y="168" width="1" height="1" fill="#000080"/>
<rect x="78" y="168" width="1" height="1" fill="#000080"/>
<rect x="85" y="168" width="1" height="1" fill="#000080"/>
<rect x="89" y="168" width="1" height="1" fill="#000080"/>
<rect x="78" y="169" width="1" height="1" fill="#000080"/>
<rect x="85" y="169" width="2" height="1" fill="#000080"/>
<rect x="88" y="169" width="2" height="1" fill="#000080"/>
<rect x="34" y="179" width="1" height="1" fill="#808080"/>
<rect x="36" y="179" width="1" height="1" fill="#808080"/>
<rect x="38" y="179" width="1" height="1" fill="#808080"/>
<rect x="24.5" y="175.5" width="8" height="8" fill="#fff" stroke="#808080" stroke-width="1"/>
<rect x="26" y="179" width="5" height="1" fill="#000"/>
<rect x="28" y="177" width="1" height="5" fill="#000"/>
<rect x="40" y="172" width="11" height="1" fill="#000"/>
<rect x="40" y="173" width="1" height="1" fill="#000"/>
<rect x="41" y="173" width="1" height="1" fill="#00a0a0"/>
<rect x="42" y="173" width="1" height="1" fill="#fff"/>
<rect x="43" y="173" width="7" height="1" fill="#00a0a0"/>
<rect x="50" y="173" width="1" height="1" fill="#000"/>
<rect x="40" y="174" width="1" height="1" fill="#000"/>
<rect x="41" y="174" width="9" height="1" fill="#fff"/>
<rect x="50" y="174" width="1" height="1" fill="#000"/>
<rect x="40" y="175" width="1" height="1" fill="#000"/>
<rect x="41" y="175" width="1" height="1" fill="#fff"/>
<rect x="42" y="175" width="6" height="1" fill="#c0c0c0"/>
<rect x="48" y="175" width="2" height="1" fill="#fff"/>
<rect x="50" y="175" width="1" height="1" fill="#000"/>
<rect x="40" y="176" width="1" height="1" fill="#000"/>
<rect x="41" y="176" width="1" height="1" fill="#fff"/>
<rect x="42" y="176" width="6" height="1" fill="#c0c0c0"/>
<rect x="48" y="176" width="2" height="1" fill="#fff"/>
<rect x="50" y="176" width="1" height="1" fill="#000"/>
<rect x="40" y="177" width="1" height="1" fill="#000"/>
<rect x="41" y="177" width="1" height="1" fill="#fff"/>
<rect x="42" y="177" width="1" height="1" fill="#c0c0c0"/>
<rect x="43" y="177" width="11" height="1" fill="#000"/>
<rect x="40" y="178" width="1" height="1" fill="#000"/>
<rect x="41" y="178" width="1" height="1" fill="#fff"/>
<rect x="42" y="178" width="1" height="1" fill="#c0c0c0"/>
<rect x="43" y="178" width="1" height="1" fill="#000"/>
<rect x="44" y="178" width="1" height="1" fill="#00a0a0"/>
<rect x="45" y="178" width="1" height="1" fill="#fff"/>
<rect x="46" y="178" width="7" height="1" fill="#00a0a0"/>
<rect x="53" y="178" width="1" height="1" fill="#000"/>
<rect x="40" y="179" width="4" height="1" fill="#000"/>
<rect x="44" y="179" width="9" height="1" fill="#fff"/>
<rect x="53" y="179" width="1" height="1" fill="#000"/>
<rect x="43" y="180" width="1" height="1" fill="#000"/>
<rect x="44" y="180" width="1" height="1" fill="#fff"/>
<rect x="45" y="180" width="6" height="1" fill="#000080"/>
<rect x="51" y="180" width="1" height="1" fill="#c0c0c0"/>
<rect x="52" y="180" width="1" height="1" fill="#fff"/>
<rect x="53" y="180" width="1" height="1" fill="#000"/>
<rect x="43" y="181" width="1" height="1" fill="#000"/>
<rect x="44" y="181" width="9" height="1" fill="#fff"/>
<rect x="53" y="181" width="1" height="1" fill="#000"/>
<rect x="43" y="182" width="1" height="1" fill="#000"/>
<rect x="44" y="182" width="1" height="1" fill="#fff"/>
<rect x="45" y="182" width="6" height="1" fill="#000080"/>
<rect x="51" y="182" width="1" height="1" fill="#c0c0c0"/>
<rect x="52" y="182" width="1" height="1" fill="#fff"/>
<rect x="53" y="182" width="1" height="1" fill="#000"/>
<rect x="43" y="183" width="1" height="1" fill="#000"/>
<rect x="44" y="183" width="9" height="1" fill="#fff"/>
<rect x="53" y="183" width="1" height="1" fill="#000"/>
<rect x="43" y="184" width="1" height="1" fill="#000"/>
<rect x="44" y="184" width="9" height="1" fill="#fff"/>
<rect x="53" y="184" width="1" height="1" fill="#000"/>
<rect x="43" y="185" width="11" height="1" fill="#000"/>
<rect x="34" y="195" width="1" height="1" fill="#808080"/>
<rect x="36" y="195" width="1" height="1" fill="#808080"/>
<rect x="38" y="195" width="1" height="1" fill="#808080"/>
<rect x="24.5" y="191.5" width="8" height="8" fill="#fff" stroke="#808080" stroke-width="1"/>
<rect x="26" y="195" width="5" height="1" fill="#000"/>
<rect x="28" y="193" width="1" height="5" fill="#000"/>
<rect x="40" y="187" width="1" height="1" fill="#000080"/>
<rect x="43" y="187" width="1" height="1" fill="#000080"/>
<rect x="46" y="187" width="1" height="1" fill="#000080"/>
<rect x="50" y="187" width="2" height="1" fill="#000080"/>
<rect x="40" y="188" width="12" height="1" fill="#000080"/>
<rect x="40" y="189" width="1" height="1" fill="#000080"/>
<rect x="43" y="189" width="1" height="1" fill="#000080"/>
<rect x="46" y="189" width="1" height="1" fill="#000080"/>
<rect x="49" y="189" width="1" height="1" fill="#000080"/>
<rect x="40" y="190" width="1" height="1" fill="#000080"/>
<rect x="42" y="190" width="3" height="1" fill="#000080"/>
<rect x="46" y="190" width="3" height="1" fill="#000080"/>
<rect x="50" y="190" width="1" height="1" fill="#000080"/>
<rect x="40" y="191" width="1" height="1" fill="#000080"/>
<rect x="43" y="191" width="1" height="1" fill="#000080"/>
<rect x="46" y="191" width="1" height="1" fill="#000080"/>
<rect x="49" y="191" width="1" height="1" fill="#000080"/>
<rect x="40" y="192" width="8" height="1" fill="#000080"/>
<rect x="40" y="193" width="1" height="1" fill="#000080"/>
<rect x="43" y="193" width="1" height="1" fill="#000080"/>
<rect x="46" y="193" width="1" height="1" fill="#000080"/>
<rect x="40" y="194" width="1" height="1" fill="#000080"/>
<rect x="42" y="194" width="11" height="1" fill="#000"/>
<rect x="40" y="195" width="1" height="1" fill="#000080"/>
<rect x="42" y="195" width="1" height="1" fill="#000"/>
<rect x="43" y="195" width="1" height="1" fill="#ffff00"/>
<rect x="44" y="195" width="1" height="1" fill="#fff"/>
<rect x="45" y="195" width="1" height="1" fill="#ffff00"/>
<rect x="46" y="195" width="1" height="1" fill="#fff"/>
<rect x="47" y="195" width="1" height="1" fill="#000"/>
<rect x="48" y="195" width="1" height="1" fill="#ffff00"/>
<rect x="49" y="195" width="1" height="1" fill="#fff"/>
<rect x="50" y="195" width="1" height="1" fill="#ffff00"/>
<rect x="51" y="195" width="1" height="1" fill="#fff"/>
<rect x="52" y="195" width="1" height="1" fill="#000"/>
<rect x="40" y="196" width="1" height="1" fill="#000080"/>
<rect x="42" y="196" width="1" height="1" fill="#000"/>
<rect x="43" y="196" width="1" height="1" fill="#fff"/>
<rect x="44" y="196" width="1" height="1" fill="#ffff00"/>
<rect x="45" y="196" width="1" height="1" fill="#fff"/>
<rect x="46" y="196" width="1" height="1" fill="#ffff00"/>
<rect x="47" y="196" width="1" height="1" fill="#000"/>
<rect x="48" y="196" width="1" height="1" fill="#fff"/>
<rect x="49" y="196" width="1" height="1" fill="#ffff00"/>
<rect x="50" y="196" width="1" height="1" fill="#fff"/>
<rect x="51" y="196" width="1" height="1" fill="#ffff00"/>
<rect x="52" y="196" width="1" height="1" fill="#000"/>
<rect x="42" y="197" width="1" height="1" fill="#000"/>
<rect x="43" y="197" width="1" height="1" fill="#ffff00"/>
<rect x="44" y="197" width="1" height="1" fill="#fff"/>
<rect x="45" y="197" width="1" height="1" fill="#ffff00"/>
<rect x="46" y="197" width="1" height="1" fill="#fff"/>
<rect x="47" y="197" width="1" height="1" fill="#000"/>
<rect x="48" y="197" width="1" height="1" fill="#ffff00"/>
<rect x="49" y="197" width="1" height="1" fill="#fff"/>
<rect x="50" y="197" width="1" height="1" fill="#ffff00"/>
<rect x="51" y="197" width="1" height="1" fill="#fff"/>
<rect x="52" y="197" width="1" height="1" fill="#000"/>
<rect x="42" y="198" width="1" height="1" fill="#000"/>
<rect x="43" y="198" width="1" height="1" fill="#fff"/>
<rect x="44" y="198" width="1" height="1" fill="#ffff00"/>
<rect x="45" y="198" width="1" height="1" fill="#fff"/>
<rect x="46" y="198" width="1" height="1" fill="#ffff00"/>
<rect x="47" y="198" width="1" height="1" fill="#000"/>
<rect x="48" y="198" width="1" height="1" fill="#fff"/>
<rect x="49" y="198" width="1" height="1" fill="#ffff00"/>
<rect x="50" y="198" width="1" height="1" fill="#fff"/>
<rect x="51" y="198" width="1" height="1" fill="#ffff00"/>
<rect x="52" y="198" width="1" height="1" fill="#000"/>
<rect x="42" y="199" width="1" height="1" fill="#000"/>
<rect x="43" y="199" width="1" height="1" fill="#ffff00"/>
<rect x="44" y="199" width="1" height="1" fill="#fff"/>
<rect x="45" y="199" width="1" height="1" fill="#ffff00"/>
<rect x="46" y="199" width="1" height="1" fill="#fff"/>
<rect x="47" y="199" width="1" height="1" fill="#000"/>
<rect x="48" y="199" width="1" height="1" fill="#ffff00"/>
<rect x="49" y="199" width="1" height="1" fill="#fff"/>
<rect x="50" y="199" width="1" height="1" fill="#ffff00"/>
<rect x="51" y="199" width="1" height="1" fill="#fff"/>
<rect x="52" y="199" width="1" height="1" fill="#000"/>
<rect x="42" y="200" width="11" height="1" fill="#000"/>
<rect x="34" y="211" width="1" height="1" fill="#808080"/>
<rect x="36" y="211" width="1" height="1" fill="#808080"/>
<rect x="38" y="211" width="1" height="1" fill="#808080"/>
<rect x="24.5" y="207.5" width="8" height="8" fill="#fff" stroke="#808080" stroke-width="1"/>
<rect x="26" y="211" width="5" height="1" fill="#000"/>
<rect x="40" y="203" width="12" height="1" fill="#000"/>
<rect x="40" y="204" width="1" height="1" fill="#000"/>
<rect x="41" y="204" width="10" height="1" fill="#00a0a0"/>
<rect x="51" y="204" width="1" height="1" fill="#000"/>
<rect x="40" y="205" width="1" height="1" fill="#000"/>
<rect x="41" y="205" width="10" height="1" fill="#fff"/>
<rect x="51" y="205" width="1" height="1" fill="#000"/>
<rect x="40" y="206" width="1" height="1" fill="#000"/>
<rect x="41" y="206" width="1" height="1" fill="#fff"/>
<rect x="42" y="206" width="2" height="1" fill="#000080"/>
<rect x="44" y="206" width="7" height="1" fill="#fff"/>
<rect x="51" y="206" width="1" height="1" fill="#000"/>
<rect x="40" y="207" width="1" height="1" fill="#000"/>
<rect x="41" y="207" width="4" height="1" fill="#fff"/>
<rect x="45" y="207" width="4" height="1" fill="#000"/>
<rect x="49" y="207" width="2" height="1" fill="#fff"/>
<rect x="51" y="207" width="1" height="1" fill="#000"/>
<rect x="40" y="208" width="1" height="1" fill="#000"/>
<rect x="41" y="208" width="1" height="1" fill="#fff"/>
<rect x="42" y="208" width="2" height="1" fill="#000080"/>
<rect x="44" y="208" width="1" height="1" fill="#000"/>
<rect x="45" y="208" width="1" height="1" fill="#00ffff"/>
<rect x="46" y="208" width="1" height="1" fill="#40b0c0"/>
<rect x="47" y="208" width="1" height="1" fill="#00ffff"/>
<rect x="48" y="208" width="1" height="1" fill="#40b0c0"/>
<rect x="49" y="208" width="1" height="1" fill="#00ffff"/>
<rect x="50" y="208" width="2" height="1" fill="#000"/>
<rect x="40" y="209" width="1" height="1" fill="#000"/>
<rect x="41" y="209" width="2" height="1" fill="#fff"/>
<rect x="43" y="209" width="1" height="1" fill="#000"/>
<rect x="44" y="209" width="1" height="1" fill="#00ffff"/>
<rect x="45" y="209" width="1" height="1" fill="#40b0c0"/>
<rect x="46" y="209" width="1" height="1" fill="#00ffff"/>
<rect x="47" y="209" width="1" height="1" fill="#40b0c0"/>
<rect x="48" y="209" width="1" height="1" fill="#00ffff"/>
<rect x="49" y="209" width="1" height="1" fill="#40b0c0"/>
<rect x="50" y="209" width="1" height="1" fill="#00ffff"/>
<rect x="51" y="209" width="1" height="1" fill="#000"/>
<rect x="40" y="210" width="1" height="1" fill="#000"/>
<rect x="41" y="210" width="1" height="1" fill="#fff"/>
<rect x="42" y="210" width="1" height="1" fill="#000080"/>
<rect x="43" y="210" width="1" height="1" fill="#000"/>
<rect x="44" y="210" width="1" height="1" fill="#40b0c0"/>
<rect x="45" y="210" width="1" height="1" fill="#00ffff"/>
<rect x="46" y="210" width="1" height="1" fill="#40b0c0"/>
<rect x="47" y="210" width="1" height="1" fill="#00ffff"/>
<rect x="48" y="210" width="1" height="1" fill="#40b0c0"/>
<rect x="49" y="210" width="1" height="1" fill="#00ffff"/>
<rect x="50" y="210" width="1" height="1" fill="#40b0c0"/>
<rect x="51" y="210" width="1" height="1" fill="#00ffff"/>
<rect x="52" y="210" width="1" height="1" fill="#000"/>
<rect x="40" y="211" width="1" height="1" fill="#000"/>
<rect x="41" y="211" width="2" height="1" fill="#fff"/>
<rect x="43" y="211" width="1" height="1" fill="#000"/>
<rect x="44" y="211" width="1" height="1" fill="#00ffff"/>
<rect x="45" y="211" width="1" height="1" fill="#40b0c0"/>
<rect x="46" y="211" width="1" height="1" fill="#00ffff"/>
<rect x="47" y="211" width="1" height="1" fill="#40b0c0"/>
<rect x="48" y="211" width="1" height="1" fill="#00ffff"/>
<rect x="49" y="211" width="1" height="1" fill="#40b0c0"/>
<rect x="50" y="211" width="1" height="1" fill="#00ffff"/>
<rect x="51" y="211" width="1" height="1" fill="#40b0c0"/>
<rect x="52" y="211" width="1" height="1" fill="#000"/>
<rect x="40" y="212" width="1" height="1" fill="#000"/>
<rect x="41" y="212" width="1" height="1" fill="#fff"/>
<rect x="42" y="212" width="1" height="1" fill="#000080"/>
<rect x="43" y="212" width="1" height="1" fill="#000"/>
<rect x="44" y="212" width="1" height="1" fill="#40b0c0"/>
<rect x="45" y="212" width="1" height="1" fill="#00ffff"/>
<rect x="46" y="212" width="1" height="1" fill="#40b0c0"/>
<rect x="47" y="212" width="1" height="1" fill="#00ffff"/>
<rect x="48" y="212" width="1" height="1" fill="#40b0c0"/>
<rect x="49" y="212" width="1" height="1" fill="#00ffff"/>
<rect x="50" y="212" width="1" height="1" fill="#40b0c0"/>
<rect x="51" y="212" width="1" height="1" fill="#00ffff"/>
<rect x="52" y="212" width="1" height="1" fill="#000"/>
<rect x="40" y="213" width="1" height="1" fill="#000"/>
<rect x="41" y="213" width="2" height="1" fill="#fff"/>
<rect x="43" y="213" width="1" height="1" fill="#000"/>
<rect x="44" y="213" width="1" height="1" fill="#00ffff"/>
<rect x="45" y="213" width="1" height="1" fill="#40b0c0"/>
<rect x="46" y="213" width="1" height="1" fill="#00ffff"/>
<rect x="47" y="213" width="1" height="1" fill="#40b0c0"/>
<rect x="48" y="213" width="1" height="1" fill="#00ffff"/>
<rect x="49" y="213" width="1" height="1" fill="#40b0c0"/>
<rect x="50" y="213" width="1" height="1" fill="#00ffff"/>
<rect x="51" y="213" width="1" height="1" fill="#40b0c0"/>
<rect x="52" y="213" width="1" height="1" fill="#000"/>
<rect x="40" y="214" width="5" height="1" fill="#000"/>
<rect x="45" y="214" width="1" height="1" fill="#40b0c0"/>
<rect x="46" y="214" width="1" height="1" fill="#00ffff"/>
<rect x="47" y="214" width="1" height="1" fill="#40b0c0"/>
<rect x="48" y="214" width="1" height="1" fill="#00ffff"/>
<rect x="49" y="214" width="1" height="1" fill="#40b0c0"/>
<rect x="50" y="214" width="1" height="1" fill="#00ffff"/>
<rect x="51" y="214" width="1" height="1" fill="#40b0c0"/>
<rect x="52" y="214" width="1" height="1" fill="#000"/>
<rect x="44" y="215" width="2" height="1" fill="#000"/>
<rect x="46" y="215" width="1" height="1" fill="#40b0c0"/>
<rect x="47" y="215" width="1" height="1" fill="#00ffff"/>
<rect x="48" y="215" width="1" height="1" fill="#40b0c0"/>
<rect x="49" y="215" width="1" height="1" fill="#00ffff"/>
<rect x="50" y="215" width="1" height="1" fill="#40b0c0"/>
<rect x="51" y="215" width="2" height="1" fill="#000"/>
<rect x="45" y="216" width="9" height="1" fill="#000"/>
<rect x="52" y="217" width="3" height="1" fill="#000"/>
<rect x="53" y="218" width="2" height="1" fill="#000"/>
<rect x="48" y="227" width="1" height="1" fill="#808080"/>
<rect x="50" y="227" width="1" height="1" fill="#808080"/>
<rect x="52" y="227" width="1" height="1" fill="#808080"/>
<rect x="54" y="227" width="1" height="1" fill="#808080"/>
<rect x="56" y="227" width="1" height="1" fill="#808080"/>
<rect x="59" y="221" width="12" height="1" fill="#000"/>
<rect x="59" y="222" width="1" height="1" fill="#000"/>
<rect x="60" y="222" width="10" height="1" fill="#00a0a0"/>
<rect x="70" y="222" width="1" height="1" fill="#000"/>
<rect x="59" y="223" width="1" height="1" fill="#000"/>
<rect x="60" y="223" width="10" height="1" fill="#fff"/>
<rect x="70" y="223" width="1" height="1" fill="#000"/>
<rect x="59" y="224" width="1" height="1" fill="#000"/>
<rect x="60" y="224" width="1" height="1" fill="#fff"/>
<rect x="61" y="224" width="2" height="1" fill="#000080"/>
<rect x="63" y="224" width="1" height="1" fill="#fff"/>
<rect x="64" y="224" width="5" height="1" fill="#000080"/>
<rect x="69" y="224" width="1" height="1" fill="#fff"/>
<rect x="70" y="224" width="1" height="1" fill="#000"/>
<rect x="59" y="225" width="1" height="1" fill="#000"/>
<rect x="60" y="225" width="10" height="1" fill="#fff"/>
<rect x="70" y="225" width="1" height="1" fill="#000"/>
<rect x="59" y="226" width="1" height="1" fill="#000"/>
<rect x="60" y="226" width="1" height="1" fill="#fff"/>
<rect x="61" y="226" width="2" height="1" fill="#000080"/>
<rect x="63" y="226" width="1" height="1" fill="#fff"/>
<rect x="64" y="226" width="5" height="1" fill="#000080"/>
<rect x="69" y="226" width="1" height="1" fill="#fff"/>
<rect x="70" y="226" width="1" height="1" fill="#000"/>
<rect x="59" y="227" width="1" height="1" fill="#000"/>
<rect x="60" y="227" width="10" height="1" fill="#fff"/>
<rect x="70" y="227" width="1" height="1" fill="#000"/>
<rect x="59" y="228" width="1" height="1" fill="#000"/>
<rect x="60" y="228" width="1" height="1" fill="#fff"/>
<rect x="61" y="228" width="2" height="1" fill="#000080"/>
<rect x="63" y="228" width="1" height="1" fill="#fff"/>
<rect x="64" y="228" width="5" height="1" fill="#000080"/>
<rect x="69" y="228" width="1" height="1" fill="#fff"/>
<rect x="70" y="228" width="1" height="1" fill="#000"/>
<rect x="59" y="229" width="1" height="1" fill="#000"/>
<rect x="60" y="229" width="10" height="1" fill="#fff"/>
<rect x="70" y="229" width="1" height="1" fill="#000"/>
<rect x="59" y="230" width="12" height="1" fill="#000"/>
<rect x="34" y="243" width="1" height="1" fill="#808080"/>
<rect x="36" y="243" width="1" height="1" fill="#808080"/>
<rect x="38" y="243" width="1" height="1" fill="#808080"/>
<rect x="24.5" y="239.5" width="8" height="8" fill="#fff" stroke="#808080" stroke-width="1"/>
<rect x="26" y="243" width="5" height="1" fill="#000"/>
<rect x="28" y="241" width="1" height="5" fill="#000"/>
<rect x="39" y="236" width="4" height="1" fill="#0000ff"/>
<rect x="52" y="236" width="2" height="1" fill="#0000ff"/>
<rect x="40" y="237" width="2" height="1" fill="#0000ff"/>
<rect x="48" y="237" width="2" height="1" fill="#0000ff"/>
<rect x="51" y="237" width="1" height="1" fill="#0000ff"/>
<rect x="54" y="237" width="1" height="1" fill="#0000ff"/>
<rect x="40" y="238" width="2" height="1" fill="#0000ff"/>
<rect x="47" y="238" width="2" height="1" fill="#0000ff"/>
<rect x="50" y="238" width="1" height="1" fill="#0000ff"/>
<rect x="55" y="238" width="1" height="1" fill="#0000ff"/>
<rect x="40" y="239" width="2" height="1" fill="#0000ff"/>
<rect x="46" y="239" width="2" height="1" fill="#0000ff"/>
<rect x="50" y="239" width="1" height="1" fill="#0000ff"/>
<rect x="55" y="239" width="1" height="1" fill="#0000ff"/>
<rect x="40" y="240" width="2" height="1" fill="#0000ff"/>
<rect x="45" y="240" width="2" height="1" fill="#0000ff"/>
<rect x="50" y="240" width="1" height="1" fill="#0000ff"/>
<rect x="55" y="240" width="1" height="1" fill="#0000ff"/>
<rect x="40" y="241" width="2" height="1" fill="#0000ff"/>
<rect x="44" y="241" width="2" height="1" fill="#0000ff"/>
<rect x="51" y="241" width="1" height="1" fill="#0000ff"/>
<rect x="54" y="241" width="1" height="1" fill="#0000ff"/>
<rect x="39" y="242" width="4" height="1" fill="#0000ff"/>
<rect x="52" y="242" width="2" height="1" fill="#0000ff"/>
<rect x="39" y="245" width="2" height="1" fill="#0000ff"/>
<rect x="43" y="245" width="3" height="1" fill="#0000ff"/>
<rect x="48" y="245" width="1" height="1" fill="#0000ff"/>
<rect x="50" y="245" width="4" height="1" fill="#0000ff"/>
<rect x="40" y="246" width="1" height="1" fill="#0000ff"/>
<rect x="42" y="246" width="1" height="1" fill="#0000ff"/>
<rect x="45" y="246" width="1" height="1" fill="#0000ff"/>
<rect x="47" y="246" width="1" height="1" fill="#0000ff"/>
<rect x="50" y="246" width="1" height="1" fill="#0000ff"/>
<rect x="54" y="246" width="1" height="1" fill="#0000ff"/>
<rect x="41" y="247" width="1" height="1" fill="#0000ff"/>
<rect x="46" y="247" width="1" height="1" fill="#0000ff"/>
<rect x="50" y="247" width="4" height="1" fill="#0000ff"/>
<rect x="40" y="248" width="1" height="1" fill="#0000ff"/>
<rect x="42" y="248" width="1" height="1" fill="#0000ff"/>
<rect x="46" y="248" width="1" height="1" fill="#0000ff"/>
<rect x="50" y="248" width="1" height="1" fill="#0000ff"/>
<rect x="53" y="248" width="1" height="1" fill="#0000ff"/>
<rect x="39" y="249" width="2" height="1" fill="#0000ff"/>
<rect x="42" y="249" width="2" height="1" fill="#0000ff"/>
<rect x="45" y="249" width="3" height="1" fill="#0000ff"/>
<rect x="50" y="249" width="1" height="1" fill="#0000ff"/>
<rect x="54" y="249" width="1" height="1" fill="#0000ff"/>
</svg>
<div class="tr" style="left:41px;top:59px;">RS232 [FBs-40MC]</div>
<div class="tr" style="left:60px;top:75px;"><span class="cj">系統組態</span></div>
<div class="tr" style="left:60px;top:91px;"><span class="cj">階梯圖</span></div>
<div class="tr" style="left:79px;top:107px;"><span class="cj">主程式區</span></div>
<div class="tr" style="left:98px;top:123px;"><span class="cj">拋等咪玲</span></div>
<div class="tr" style="left:79px;top:139px;"><span class="cj">副程式區</span></div>
<div class="tr" style="left:98px;top:155px;"><span class="cj">萬等咪玲</span></div>
<div class="tr" style="left:60px;top:171px;"><span class="cj">表格編輯</span></div>
<div class="tr" style="left:60px;top:187px;"><span class="cj">註解</span></div>
<div class="tr" style="left:60px;top:203px;"><span class="cj">元件狀態</span></div>
<div class="tr" style="left:79px;top:219px;font-style:italic;margin-top:-1px;">StatusPage1</div>
<div class="tr" style="left:60px;top:235px;">I/O<span class="cj">編號配置狀態</span></div>
<!-- editor -->
<div class="a" style="left:164px;top:45px;width:695px;height:550px;background:#fff;border:1px solid #808080;border-right:none;border-bottom:1px solid #808080"></div>
<div class="a" style="left:165px;top:46px;width:40px;height:548px;background:#f0f0f0;border-right:1px solid #808080"></div>
<div class="a" style="left:164px;top:45px;width:695px;height:550px;overflow:hidden">
<div class="a" style="left:-164px;top:-45px;width:894px;height:647px">
<svg width="894" height="647" style="position:absolute;left:0;top:0" shape-rendering="crispEdges">
<rect x="213" y="47" width="70" height="53" fill="#98b0d0"/>
<rect x="212" y="46" width="1" height="1" fill="#0000ff"/>
<rect x="283" y="46" width="1" height="1" fill="#0000ff"/>
<rect x="354" y="46" width="1" height="1" fill="#0000ff"/>
<rect x="425" y="46" width="1" height="1" fill="#0000ff"/>
<rect x="496" y="46" width="1" height="1" fill="#0000ff"/>
<rect x="567" y="46" width="1" height="1" fill="#0000ff"/>
<rect x="638" y="46" width="1" height="1" fill="#0000ff"/>
<rect x="709" y="46" width="1" height="1" fill="#0000ff"/>
<rect x="780" y="46" width="1" height="1" fill="#0000ff"/>
<rect x="851" y="46" width="1" height="1" fill="#0000ff"/>
<rect x="212" y="100" width="1" height="1" fill="#0000ff"/>
<rect x="283" y="100" width="1" height="1" fill="#0000ff"/>
<rect x="354" y="100" width="1" height="1" fill="#0000ff"/>
<rect x="425" y="100" width="1" height="1" fill="#0000ff"/>
<rect x="496" y="100" width="1" height="1" fill="#0000ff"/>
<rect x="567" y="100" width="1" height="1" fill="#0000ff"/>
<rect x="638" y="100" width="1" height="1" fill="#0000ff"/>
<rect x="709" y="100" width="1" height="1" fill="#0000ff"/>
<rect x="780" y="100" width="1" height="1" fill="#0000ff"/>
<rect x="851" y="100" width="1" height="1" fill="#0000ff"/>
<rect x="212" y="154" width="1" height="1" fill="#0000ff"/>
<rect x="283" y="154" width="1" height="1" fill="#0000ff"/>
<rect x="354" y="154" width="1" height="1" fill="#0000ff"/>
<rect x="425" y="154" width="1" height="1" fill="#0000ff"/>
<rect x="496" y="154" width="1" height="1" fill="#0000ff"/>
<rect x="567" y="154" width="1" height="1" fill="#0000ff"/>
<rect x="638" y="154" width="1" height="1" fill="#0000ff"/>
<rect x="709" y="154" width="1" height="1" fill="#0000ff"/>
<rect x="780" y="154" width="1" height="1" fill="#0000ff"/>
<rect x="851" y="154" width="1" height="1" fill="#0000ff"/>
<rect x="212" y="208" width="1" height="1" fill="#0000ff"/>
<rect x="283" y="208" width="1" height="1" fill="#0000ff"/>
<rect x="354" y="208" width="1" height="1" fill="#0000ff"/>
<rect x="425" y="208" width="1" height="1" fill="#0000ff"/>
<rect x="496" y="208" width="1" height="1" fill="#0000ff"/>
<rect x="567" y="208" width="1" height="1" fill="#0000ff"/>
<rect x="638" y="208" width="1" height="1" fill="#0000ff"/>
<rect x="709" y="208" width="1" height="1" fill="#0000ff"/>
<rect x="780" y="208" width="1" height="1" fill="#0000ff"/>
<rect x="851" y="208" width="1" height="1" fill="#0000ff"/>
<rect x="212" y="262" width="1" height="1" fill="#0000ff"/>
<rect x="283" y="262" width="1" height="1" fill="#0000ff"/>
<rect x="354" y="262" width="1" height="1" fill="#0000ff"/>
<rect x="425" y="262" width="1" height="1" fill="#0000ff"/>
<rect x="496" y="262" width="1" height="1" fill="#0000ff"/>
<rect x="567" y="262" width="1" height="1" fill="#0000ff"/>
<rect x="638" y="262" width="1" height="1" fill="#0000ff"/>
<rect x="709" y="262" width="1" height="1" fill="#0000ff"/>
<rect x="780" y="262" width="1" height="1" fill="#0000ff"/>
<rect x="851" y="262" width="1" height="1" fill="#0000ff"/>
<rect x="212" y="316" width="1" height="1" fill="#0000ff"/>
<rect x="283" y="316" width="1" height="1" fill="#0000ff"/>
<rect x="354" y="316" width="1" height="1" fill="#0000ff"/>
<rect x="425" y="316" width="1" height="1" fill="#0000ff"/>
<rect x="496" y="316" width="1" height="1" fill="#0000ff"/>
<rect x="567" y="316" width="1" height="1" fill="#0000ff"/>
<rect x="638" y="316" width="1" height="1" fill="#0000ff"/>
<rect x="709" y="316" width="1" height="1" fill="#0000ff"/>
<rect x="780" y="316" width="1" height="1" fill="#0000ff"/>
<rect x="851" y="316" width="1" height="1" fill="#0000ff"/>
<rect x="212" y="370" width="1" height="1" fill="#0000ff"/>
<rect x="283" y="370" width="1" height="1" fill="#0000ff"/>
<rect x="354" y="370" width="1" height="1" fill="#0000ff"/>
<rect x="425" y="370" width="1" height="1" fill="#0000ff"/>
<rect x="496" y="370" width="1" height="1" fill="#0000ff"/>
<rect x="567" y="370" width="1" height="1" fill="#0000ff"/>
<rect x="638" y="370" width="1" height="1" fill="#0000ff"/>
<rect x="709" y="370" width="1" height="1" fill="#0000ff"/>
<rect x="780" y="370" width="1" height="1" fill="#0000ff"/>
<rect x="851" y="370" width="1" height="1" fill="#0000ff"/>
<rect x="212" y="424" width="1" height="1" fill="#0000ff"/>
<rect x="283" y="424" width="1" height="1" fill="#0000ff"/>
<rect x="354" y="424" width="1" height="1" fill="#0000ff"/>
<rect x="425" y="424" width="1" height="1" fill="#0000ff"/>
<rect x="496" y="424" width="1" height="1" fill="#0000ff"/>
<rect x="567" y="424" width="1" height="1" fill="#0000ff"/>
<rect x="638" y="424" width="1" height="1" fill="#0000ff"/>
<rect x="709" y="424" width="1" height="1" fill="#0000ff"/>
<rect x="780" y="424" width="1" height="1" fill="#0000ff"/>
<rect x="851" y="424" width="1" height="1" fill="#0000ff"/>
<rect x="212" y="478" width="1" height="1" fill="#0000ff"/>
<rect x="283" y="478" width="1" height="1" fill="#0000ff"/>
<rect x="354" y="478" width="1" height="1" fill="#0000ff"/>
<rect x="425" y="478" width="1" height="1" fill="#0000ff"/>
<rect x="496" y="478" width="1" height="1" fill="#0000ff"/>
<rect x="567" y="478" width="1" height="1" fill="#0000ff"/>
<rect x="638" y="478" width="1" height="1" fill="#0000ff"/>
<rect x="709" y="478" width="1" height="1" fill="#0000ff"/>
<rect x="780" y="478" width="1" height="1" fill="#0000ff"/>
<rect x="851" y="478" width="1" height="1" fill="#0000ff"/>
<rect x="212" y="532" width="1" height="1" fill="#0000ff"/>
<rect x="283" y="532" width="1" height="1" fill="#0000ff"/>
<rect x="354" y="532" width="1" height="1" fill="#0000ff"/>
<rect x="425" y="532" width="1" height="1" fill="#0000ff"/>
<rect x="496" y="532" width="1" height="1" fill="#0000ff"/>
<rect x="567" y="532" width="1" height="1" fill="#0000ff"/>
<rect x="638" y="532" width="1" height="1" fill="#0000ff"/>
<rect x="709" y="532" width="1" height="1" fill="#0000ff"/>
<rect x="780" y="532" width="1" height="1" fill="#0000ff"/>
<rect x="851" y="532" width="1" height="1" fill="#0000ff"/>
<rect x="212" y="586" width="1" height="1" fill="#0000ff"/>
<rect x="283" y="586" width="1" height="1" fill="#0000ff"/>
<rect x="354" y="586" width="1" height="1" fill="#0000ff"/>
<rect x="425" y="586" width="1" height="1" fill="#0000ff"/>
<rect x="496" y="586" width="1" height="1" fill="#0000ff"/>
<rect x="567" y="586" width="1" height="1" fill="#0000ff"/>
<rect x="638" y="586" width="1" height="1" fill="#0000ff"/>
<rect x="709" y="586" width="1" height="1" fill="#0000ff"/>
<rect x="780" y="586" width="1" height="1" fill="#0000ff"/>
<rect x="851" y="586" width="1" height="1" fill="#0000ff"/>
<rect x="212" y="67" width="646" height="1" fill="#000"/>
<rect x="212" y="121" width="646" height="1" fill="#000"/>
<rect x="212" y="175" width="71" height="1" fill="#000"/>
<rect x="212" y="229" width="142" height="1" fill="#000"/>
<rect x="212" y="283" width="504" height="1" fill="#000"/>
<rect x="212" y="337" width="213" height="1" fill="#000"/>
<rect x="212" y="391" width="646" height="1" fill="#000"/>
<rect x="212" y="445" width="142" height="1" fill="#000"/>
<rect x="212" y="499" width="142" height="1" fill="#000"/>
<rect x="212" y="553" width="646" height="1" fill="#000"/>
<rect x="283" y="121" width="1" height="55" fill="#000"/>
<rect x="354" y="121" width="1" height="109" fill="#000"/>
<rect x="425" y="283" width="1" height="55" fill="#000"/>
<rect x="354" y="391" width="1" height="109" fill="#000"/>
<rect x="354" y="553" width="1" height="43" fill="#000"/>
<rect x="210" y="46" width="2" height="549" fill="#000"/>
<rect x="212" y="67" width="71" height="1" fill="#c0ffb0"/>
<rect x="243" y="67" width="11" height="1" fill="#98b0d0"/>
<rect x="241" y="61" width="2" height="12" fill="#c0ffb0"/>
<rect x="254" y="61" width="2" height="12" fill="#c0ffb0"/>
<rect x="314" y="67" width="11" height="1" fill="#fff"/>
<rect x="312" y="61" width="2" height="12" fill="#000"/>
<rect x="325" y="61" width="2" height="12" fill="#000"/>
<line x1="315.3" y1="72.5" x2="322.7" y2="62.5" stroke="#000" stroke-width="1.25" shape-rendering="auto"/>
<rect x="456" y="67" width="11" height="1" fill="#fff"/>
<rect x="454" y="61" width="2" height="12" fill="#000"/>
<rect x="467" y="61" width="2" height="12" fill="#000"/>
<rect x="527" y="67" width="11" height="1" fill="#fff"/>
<rect x="525" y="61" width="2" height="12" fill="#000"/>
<rect x="538" y="61" width="2" height="12" fill="#000"/>
<rect x="243" y="121" width="11" height="1" fill="#fff"/>
<rect x="241" y="115" width="2" height="12" fill="#000"/>
<rect x="254" y="115" width="2" height="12" fill="#000"/>
<rect x="248" y="115" width="1" height="12" fill="#000"/>
<path d="M245.5 119.5 L248.5 115.8 L251.5 119.5 Z" stroke="#000" fill="none" stroke-width="1" shape-rendering="auto"/>
<rect x="314" y="121" width="11" height="1" fill="#fff"/>
<rect x="312" y="115" width="2" height="12" fill="#000"/>
<rect x="325" y="115" width="2" height="12" fill="#000"/>
<rect x="385" y="121" width="11" height="1" fill="#fff"/>
<rect x="383" y="115" width="2" height="12" fill="#000"/>
<rect x="396" y="115" width="2" height="12" fill="#000"/>
<line x1="386.3" y1="126.5" x2="393.7" y2="116.5" stroke="#000" stroke-width="1.25" shape-rendering="auto"/>
<rect x="456" y="121" width="11" height="1" fill="#fff"/>
<rect x="454" y="115" width="2" height="12" fill="#000"/>
<rect x="467" y="115" width="2" height="12" fill="#000"/>
<line x1="457.3" y1="126.5" x2="464.7" y2="116.5" stroke="#000" stroke-width="1.25" shape-rendering="auto"/>
<rect x="527" y="121" width="11" height="1" fill="#fff"/>
<rect x="525" y="115" width="2" height="12" fill="#000"/>
<rect x="538" y="115" width="2" height="12" fill="#000"/>
<line x1="528.3" y1="126.5" x2="535.7" y2="116.5" stroke="#000" stroke-width="1.25" shape-rendering="auto"/>
<rect x="598" y="121" width="11" height="1" fill="#fff"/>
<rect x="596" y="115" width="2" height="12" fill="#000"/>
<rect x="609" y="115" width="2" height="12" fill="#000"/>
<line x1="599.3" y1="126.5" x2="606.7" y2="116.5" stroke="#000" stroke-width="1.25" shape-rendering="auto"/>
<rect x="243" y="175" width="11" height="1" fill="#fff"/>
<rect x="241" y="169" width="2" height="12" fill="#000"/>
<rect x="254" y="169" width="2" height="12" fill="#000"/>
<rect x="248" y="169" width="1" height="12" fill="#000"/>
<path d="M245.5 173.5 L248.5 169.8 L251.5 173.5 Z" stroke="#000" fill="none" stroke-width="1" shape-rendering="auto"/>
<rect x="243" y="229" width="11" height="1" fill="#fff"/>
<rect x="241" y="223" width="2" height="12" fill="#000"/>
<rect x="254" y="223" width="2" height="12" fill="#000"/>
<rect x="243" y="283" width="11" height="1" fill="#fff"/>
<rect x="241" y="277" width="2" height="12" fill="#000"/>
<rect x="254" y="277" width="2" height="12" fill="#000"/>
<rect x="248" y="277" width="1" height="12" fill="#000"/>
<path d="M245.5 281.5 L248.5 277.8 L251.5 281.5 Z" stroke="#000" fill="none" stroke-width="1" shape-rendering="auto"/>
<rect x="314" y="283" width="11" height="1" fill="#fff"/>
<rect x="312" y="277" width="2" height="12" fill="#000"/>
<rect x="325" y="277" width="2" height="12" fill="#000"/>
<line x1="315.3" y1="288.5" x2="322.7" y2="278.5" stroke="#000" stroke-width="1.25" shape-rendering="auto"/>
<rect x="385" y="283" width="11" height="1" fill="#fff"/>
<rect x="383" y="277" width="2" height="12" fill="#000"/>
<rect x="396" y="277" width="2" height="12" fill="#000"/>
<line x1="386.3" y1="288.5" x2="393.7" y2="278.5" stroke="#000" stroke-width="1.25" shape-rendering="auto"/>
<rect x="243" y="337" width="11" height="1" fill="#fff"/>
<rect x="241" y="331" width="2" height="12" fill="#000"/>
<rect x="254" y="331" width="2" height="12" fill="#000"/>
<rect x="248" y="331" width="1" height="12" fill="#000"/>
<path d="M245.5 335.5 L248.5 331.8 L251.5 335.5 Z" stroke="#000" fill="none" stroke-width="1" shape-rendering="auto"/>
<rect x="314" y="337" width="11" height="1" fill="#fff"/>
<rect x="312" y="331" width="2" height="12" fill="#000"/>
<rect x="325" y="331" width="2" height="12" fill="#000"/>
<rect x="385" y="337" width="11" height="1" fill="#fff"/>
<rect x="383" y="331" width="2" height="12" fill="#000"/>
<rect x="396" y="331" width="2" height="12" fill="#000"/>
<line x1="386.3" y1="342.5" x2="393.7" y2="332.5" stroke="#000" stroke-width="1.25" shape-rendering="auto"/>
<rect x="243" y="391" width="11" height="1" fill="#fff"/>
<rect x="241" y="385" width="2" height="12" fill="#000"/>
<rect x="254" y="385" width="2" height="12" fill="#000"/>
<rect x="248" y="385" width="1" height="12" fill="#000"/>
<path d="M245.5 389.5 L248.5 385.8 L251.5 389.5 Z" stroke="#000" fill="none" stroke-width="1" shape-rendering="auto"/>
<rect x="314" y="391" width="11" height="1" fill="#fff"/>
<rect x="312" y="385" width="2" height="12" fill="#000"/>
<rect x="325" y="385" width="2" height="12" fill="#000"/>
<line x1="315.3" y1="396.5" x2="322.7" y2="386.5" stroke="#000" stroke-width="1.25" shape-rendering="auto"/>
<rect x="385" y="391" width="11" height="1" fill="#fff"/>
<rect x="383" y="385" width="2" height="12" fill="#000"/>
<rect x="396" y="385" width="2" height="12" fill="#000"/>
<line x1="386.3" y1="396.5" x2="393.7" y2="386.5" stroke="#000" stroke-width="1.25" shape-rendering="auto"/>
<rect x="243" y="445" width="11" height="1" fill="#fff"/>
<rect x="241" y="439" width="2" height="12" fill="#000"/>
<rect x="254" y="439" width="2" height="12" fill="#000"/>
<rect x="248" y="439" width="1" height="12" fill="#000"/>
<path d="M245.5 443.5 L248.5 439.8 L251.5 443.5 Z" stroke="#000" fill="none" stroke-width="1" shape-rendering="auto"/>
<rect x="314" y="445" width="11" height="1" fill="#fff"/>
<rect x="312" y="439" width="2" height="12" fill="#000"/>
<rect x="325" y="439" width="2" height="12" fill="#000"/>
<rect x="243" y="499" width="11" height="1" fill="#fff"/>
<rect x="241" y="493" width="2" height="12" fill="#000"/>
<rect x="254" y="493" width="2" height="12" fill="#000"/>
<rect x="243" y="553" width="11" height="1" fill="#fff"/>
<rect x="241" y="547" width="2" height="12" fill="#000"/>
<rect x="254" y="547" width="2" height="12" fill="#000"/>
<rect x="314" y="553" width="11" height="1" fill="#fff"/>
<rect x="312" y="547" width="2" height="12" fill="#000"/>
<rect x="325" y="547" width="2" height="12" fill="#000"/>
<rect x="319" y="547" width="1" height="12" fill="#000"/>
<path d="M316.5 551.5 L319.5 547.8 L322.5 551.5 Z" stroke="#000" fill="none" stroke-width="1" shape-rendering="auto"/>
<rect x="385" y="553" width="11" height="1" fill="#fff"/>
<rect x="383" y="547" width="2" height="12" fill="#000"/>
<rect x="396" y="547" width="2" height="12" fill="#000"/>
<line x1="386.3" y1="558.5" x2="393.7" y2="548.5" stroke="#000" stroke-width="1.25" shape-rendering="auto"/>
<rect x="740" y="283" width="4" height="1" fill="#000"/>
<rect x="744" y="271" width="114" height="43" fill="#f8f8ec"/>
<rect x="744" y="271" width="1" height="43" fill="#000"/>
<rect x="744" y="271" width="114" height="1" fill="#000"/>
<rect x="744" y="313" width="114" height="1" fill="#000"/>
<rect x="797" y="271" width="1" height="43" fill="#000"/>
</svg>
<div class="lb" style="left:212px;top:48px;color:#c0ffb0">M65</div>
<div class="cm" style="left:192px;top:73px;color:#c0ffb0">　崟效斐</div>
<div class="lb" style="left:283px;top:48px;color:#0000ff">X0</div>
<div class="cm" style="left:263px;top:73px;color:#800080">堤賜邉憤</div>
<div class="cm" style="left:263px;top:86px;color:#800080">斐</div>
<div class="lb" style="left:425px;top:48px;color:#0000ff">X1</div>
<div class="cm" style="left:405px;top:73px;color:#800080">伋賜詰效</div>
<div class="cm" style="left:405px;top:86px;color:#800080">斐</div>
<div class="lb" style="left:496px;top:48px;color:#0000ff">X33</div>
<div class="cm" style="left:476px;top:73px;color:#800080">輛賜詰效</div>
<div class="cm" style="left:476px;top:86px;color:#800080">斐</div>
<div class="lb" style="left:212px;top:102px;color:#0000ff">X8</div>
<div class="cm" style="left:192px;top:127px;color:#800080">　　雄</div>
<div class="lb" style="left:283px;top:102px;color:#0000ff">M14</div>
<div class="cm" style="left:263px;top:127px;color:#800080">　雄沭璃</div>
<div class="lb" style="left:354px;top:102px;color:#0000ff">X9</div>
<div class="cm" style="left:334px;top:127px;color:#800080">　衿砦</div>
<div class="lb" style="left:425px;top:102px;color:#0000ff">M11</div>
<div class="cm" style="left:405px;top:127px;color:#800080">忒<span class="sl">/</span>趁雄緞</div>
<div class="cm" style="left:405px;top:140px;color:#800080">壽</div>
<div class="lb" style="left:496px;top:102px;color:#0000ff">M800</div>
<div class="cm" style="left:476px;top:127px;color:#800080">袟都衿僪</div>
<div class="lb" style="left:567px;top:102px;color:#0000ff">X44</div>
<div class="cm" style="left:547px;top:127px;color:#800080">綴衿砦</div>
<div class="lb" style="left:212px;top:156px;color:#0000ff">X38</div>
<div class="cm" style="left:192px;top:181px;color:#800080">綴　雄</div>
<div class="lb" style="left:212px;top:210px;color:#0000ff">M0</div>
<div class="cm" style="left:192px;top:235px;color:#800080">　雄</div>
<div class="lb" style="left:212px;top:264px;color:#0000ff">M1</div>
<div class="cm" style="left:192px;top:289px;color:#800080">趁雄<span class="sl">/</span>忒雄</div>
<div class="lb" style="left:283px;top:264px;color:#0000ff">M11</div>
<div class="cm" style="left:263px;top:289px;color:#800080">忒<span class="sl">/</span>趁雄緞</div>
<div class="cm" style="left:263px;top:302px;color:#800080">壽</div>
<div class="lb" style="left:354px;top:264px;color:#0000ff">M0</div>
<div class="cm" style="left:334px;top:289px;color:#800080">　雄</div>
<div class="lb" style="left:212px;top:318px;color:#0000ff">M1</div>
<div class="cm" style="left:192px;top:343px;color:#800080">趁雄<span class="sl">/</span>忒雄</div>
<div class="lb" style="left:283px;top:318px;color:#0000ff">M11</div>
<div class="cm" style="left:263px;top:343px;color:#800080">忒<span class="sl">/</span>趁雄緞</div>
<div class="cm" style="left:263px;top:356px;color:#800080">壽</div>
<div class="lb" style="left:354px;top:318px;color:#0000ff">M0</div>
<div class="cm" style="left:334px;top:343px;color:#800080">　雄</div>
<div class="lb" style="left:212px;top:372px;color:#0000ff">M11</div>
<div class="cm" style="left:192px;top:397px;color:#800080">忒<span class="sl">/</span>趁雄緞</div>
<div class="cm" style="left:192px;top:410px;color:#800080">壽</div>
<div class="lb" style="left:283px;top:372px;color:#0000ff">X31</div>
<div class="cm" style="left:263px;top:397px;color:#800080">輛邉痄雄</div>
<div class="cm" style="left:263px;top:410px;color:#800080">塓奧</div>
<div class="lb" style="left:354px;top:372px;color:#0000ff">X31</div>
<div class="cm" style="left:334px;top:397px;color:#800080">輛邉痄雄</div>
<div class="cm" style="left:334px;top:410px;color:#800080">塓奧</div>
<div class="lb" style="left:212px;top:426px;color:#0000ff">X42</div>
<div class="cm" style="left:192px;top:451px;color:#800080">釆賜鎮湛</div>
<div class="cm" style="left:192px;top:464px;color:#800080">綴豕</div>
<div class="lb" style="left:283px;top:426px;color:#0000ff">M11</div>
<div class="cm" style="left:263px;top:451px;color:#800080">忒<span class="sl">/</span>趁雄緞</div>
<div class="cm" style="left:263px;top:464px;color:#800080">壽</div>
<div class="lb" style="left:212px;top:480px;color:#0000ff">M50</div>
<div class="cm" style="left:192px;top:505px;color:#800080">輛邉痄雄</div>
<div class="cm" style="left:192px;top:518px;color:#800080">隙韋</div>
<div class="lb" style="left:212px;top:534px;color:#0000ff">M60</div>
<div class="cm" style="left:192px;top:559px;color:#800080">輛賜邉效</div>
<div class="cm" style="left:192px;top:572px;color:#800080">汔</div>
<div class="lb" style="left:283px;top:534px;color:#0000ff">X35</div>
<div class="cm" style="left:263px;top:559px;color:#800080">輛賜瘍效</div>
<div class="cm" style="left:263px;top:572px;color:#800080">潰睚</div>
<div class="lb" style="left:354px;top:534px;color:#0000ff">M57</div>
<div class="cm" style="left:334px;top:559px;color:#800080">汔邉隅韋</div>
<div class="cm" style="left:334px;top:572px;color:#800080"><span style="font-size:11px;letter-spacing:0;position:relative;top:-2px">U</span></div>
<div class="lb" style="left:212px;top:588px;color:#0000ff">M16</div>
<div class="rl" style="top:47px">N000</div>
<div class="rl" style="top:101px">N001</div>
<div class="rl" style="top:263px">N002</div>
<div class="rl" style="top:371px">N003</div>
<div class="rl" style="top:533px">N004</div>
<div class="lb" style="left:744px;width:53px;top:266px;color:#0000ff;letter-spacing:1.5px;text-indent:1.5px"><span style="background:#f8f8ec;padding:0 1px">10</span></div>
<div class="lb" style="left:744px;width:53px;top:287px;color:#0000ff;font-size:10.5px;letter-spacing:-0.2px;text-indent:1px">TOGG</div>
<div class="lb" style="left:806px;width:71px;top:286px;color:#0000ff">M11</div>
<div class="cm" style="left:801px;width:120px;text-align:left;text-indent:0;top:297px;color:#800080">忒<span class="sl">/</span>趁雄緞</div>
<div style="position:absolute;left:717px;top:276px;font:11px 'Liberation Sans',sans-serif;color:#ff0000;line-height:13px">TGU</div>
</div></div>
<div class="a" style="left:858px;top:45px;width:1px;height:550px;background:#808080"></div>
<!-- vscroll -->
<div class="a" style="left:859px;top:45px;width:17px;height:550px;background:#f8f8f8"></div>
<div class="a" style="left:859px;top:45px;width:17px;height:16px;background:#f0f0f0;border-right:1px solid #808080;border-bottom:1px solid #808080;border-top:1px solid #fff;border-left:1px solid #fff"></div>
<div class="a" style="left:863px;top:51px;width:0;height:0;border-left:4px solid transparent;border-right:4px solid transparent;border-bottom:4px solid #000"></div>
<div class="a" style="left:859px;top:61px;width:17px;height:16px;background:#f0f0f0;border-right:1px solid #808080;border-bottom:1px solid #808080;border-top:1px solid #fff;border-left:1px solid #fff"></div>
<div class="a" style="left:859px;top:578px;width:17px;height:16px;background:#f0f0f0;border-right:1px solid #808080;border-bottom:1px solid #808080;border-top:1px solid #fff;border-left:1px solid #fff"></div>
<div class="a" style="left:863px;top:584px;width:0;height:0;border-left:4px solid transparent;border-right:4px solid transparent;border-top:4px solid #000"></div>
<!-- tabs / hscroll -->
<div class="a" style="left:164px;top:595px;width:695px;height:17px;background:#f8f8f8"></div>
<div class="a" style="left:859px;top:595px;width:17px;height:17px;background:#f0f0f0;border-right:1px solid #a0a0a0;border-bottom:1px solid #a0a0a0;border-top:1px solid #fff;border-left:1px solid #fff"></div>
<div class="a" style="left:464px;top:596px;width:16px;height:16px;background:#f0f0f0;border-right:1px solid #808080;border-bottom:1px solid #808080;border-top:1px solid #fff;border-left:1px solid #fff"></div>
<div class="a" style="left:470px;top:600px;width:0;height:0;border-top:4px solid transparent;border-bottom:4px solid transparent;border-right:4px solid #000"></div>
<div class="a" style="left:480px;top:596px;width:156px;height:16px;background:#f0f0f0;border-right:1px solid #808080;border-bottom:1px solid #808080;border-top:1px solid #fff;border-left:1px solid #fff"></div>
<div class="a" style="left:843px;top:596px;width:16px;height:16px;background:#f0f0f0;border-right:1px solid #808080;border-bottom:1px solid #808080;border-top:1px solid #fff;border-left:1px solid #fff"></div>
<div class="a" style="left:850px;top:600px;width:0;height:0;border-top:4px solid transparent;border-bottom:4px solid transparent;border-left:4px solid #000"></div>
<div class="a" style="left:164px;top:595px;width:695px;height:1px;background:#a0a0a0"></div>
<svg class="a" style="left:0;top:0" width="894" height="647">
<path d="M173.5 594.5 L178 611 L229 611 L232.5 594.5" fill="#f0f0f0" stroke="#404040" stroke-width="1"/>
<path d="M233 594.5 L229 611 L286 611 L290.5 594.5" fill="#fff" stroke="#404040" stroke-width="1"/>
<rect x="178" y="610.5" width="51" height="1" fill="#808080"/>
</svg>
<div class="tb" style="left:178px;top:597px">拋等咪玲</div>
<div class="tb" style="left:234px;top:597px">萬等咪玲</div>
<!-- status bar -->
<div class="a" style="left:0;top:612px;width:884px;height:1px;background:#fff"></div>
<div class="sp" style="left:0;width:19px;border-left:none"></div>
<svg class="a" style="left:0;top:614px" width="20" height="18">
<g id="fd"><rect x="2" y="2" width="9" height="9" fill="#000"/><path d="M3.5 3 L3.5 9 M9.5 3 L9.5 9 M3.5 6.5 L9.5 6.5" stroke="#a0a000" stroke-width="1"/><rect x="5" y="3" width="3" height="2" fill="#fff"/><rect x="6" y="8" width="1" height="2" fill="#fff"/></g>
<use href="#fd" x="5" y="5"/>
</svg>
<div class="sp" style="left:21px;width:18px"></div>
<div class="sp" style="left:41px;width:18px"></div>
<div class="sp" style="left:61px;width:98px"></div>
<div class="sp" style="left:161px;width:97px;text-align:center;padding-top:1px;-webkit-text-stroke:0.1px #000">覆蓋</div>
<div class="sp" style="left:261px;width:148px;padding-left:1px;padding-top:1px">N0 R:1 C:1</div>
<div class="sp" style="left:411px;width:248px;padding-left:1px;padding-top:1px">U:1094 F:19129 S:A (Doc U:1310 F:6881)</div>
<div class="sp" style="left:661px;width:48px"></div>
<div class="sp" style="left:711px;width:48px"></div>
<div class="sp" style="left:761px;width:48px"></div>
<div class="sp" style="left:811px;width:48px"></div>
<div class="a" style="left:861px;top:614px;width:15px;height:1px;background:#a0a0a0"></div>
<svg class="a" style="left:860px;top:618px" width="16" height="14"><path d="M4.5 13.5 L15.5 2.5 M8.5 13.5 L15.5 6.5 M12.5 13.5 L15.5 10.5" stroke="#a0a0a0" stroke-width="1"/><path d="M5.5 13.5 L15.5 3.5 M9.5 13.5 L15.5 7.5 M13.5 13.5 L15.5 11.5" stroke="#fff" stroke-width="1"/></svg>
<div class="a" style="left:0;top:632px;width:884px;height:1px;background:#fff"></div>
<div class="a" style="left:0;top:633px;width:884px;height:7px;background:#ebebeb"></div>
<!-- right strip -->
<div class="a" style="left:876px;top:0;width:8px;height:640px;background:#e8e8e8;border-right:1px solid #d8d8d8"></div>
<div class="a" style="left:884px;top:0;width:10px;height:56px;background:#eef2f6"></div>
<div class="a" style="left:884px;top:14px;width:10px;height:1px;background:#d0d8e0"></div>
<div class="a" style="left:884px;top:56px;width:10px;height:99px;background:linear-gradient(#4e4c4a,#4a4846 40%,#454341 70%,#3e3c3a)"></div>
<svg class="a" style="left:884px;top:56px" width="10" height="99"><path d="M0 60 Q0 85 2 99 L0 99 Z" fill="#1e1c1a"/><path d="M11 36 Q2 46 1.5 62 Q1.5 85 3.5 99" stroke="#8a8886" stroke-width="1.3" fill="none"/></svg>
<div class="a" style="left:884px;top:155px;width:10px;height:55px;background:#fff"></div>
<div class="a" style="left:884px;top:210px;width:10px;height:154px;background:linear-gradient(#7a6a50 0,#7c7a80 5px,#807e88 45px,#9a8a70 55px,#3c2c24 62px,#382820 100px,#8a7a40 110px,#6a5a30 120px,#3a3a30 128px,#306040 140px,#206a40 154px)"></div>
<div class="a" style="left:884px;top:364px;width:10px;height:55px;background:#fff"></div>
<div class="a" style="left:884px;top:419px;width:10px;height:55px;background:linear-gradient(#6a6462,#726c6a 20px,#2a2624 22px,#2a2624 24px,#8a8482 26px,#8a8482)"></div>
<div class="a" style="left:884px;top:474px;width:10px;height:118px;background:#f4f6f8"></div>
<div class="a" style="left:884px;top:476px;width:10px;height:1px;background:#d8dce0"></div>
<div class="a" style="left:884px;top:592px;width:10px;height:55px;background:#4aa0ec"></div>
<!-- taskbar -->
<div class="a" style="left:0;top:640px;width:894px;height:7px;background:#4a84c4"></div>
<div class="a" style="left:0;top:641px;width:9px;height:6px;background:#6a9ad0;border:1px solid #90b8e0;border-left:none;border-bottom:none"></div>
<div class="a" style="left:11px;top:641px;width:59px;height:6px;background:#6a9ad0;border:1px solid #a0c4e8;border-bottom:none"></div>
<div class="a" style="left:26px;top:644px;width:29px;height:3px;background:#808080"></div>
<svg class="a" style="left:26px;top:644px" width="29" height="3"><circle cx="5" cy="2" r="1.2" fill="#00ff00"/><circle cx="10" cy="2" r="1.2" fill="#00ff00"/><circle cx="15" cy="2" r="1.2" fill="#00ff00"/><circle cx="20" cy="2" r="1.2" fill="#00ff00"/><circle cx="25" cy="2" r="1.2" fill="#00ff00"/></svg>
<div class="a" style="left:9px;top:640px;width:2px;height:7px;background:#3a6aa8"></div>
</body></html>
